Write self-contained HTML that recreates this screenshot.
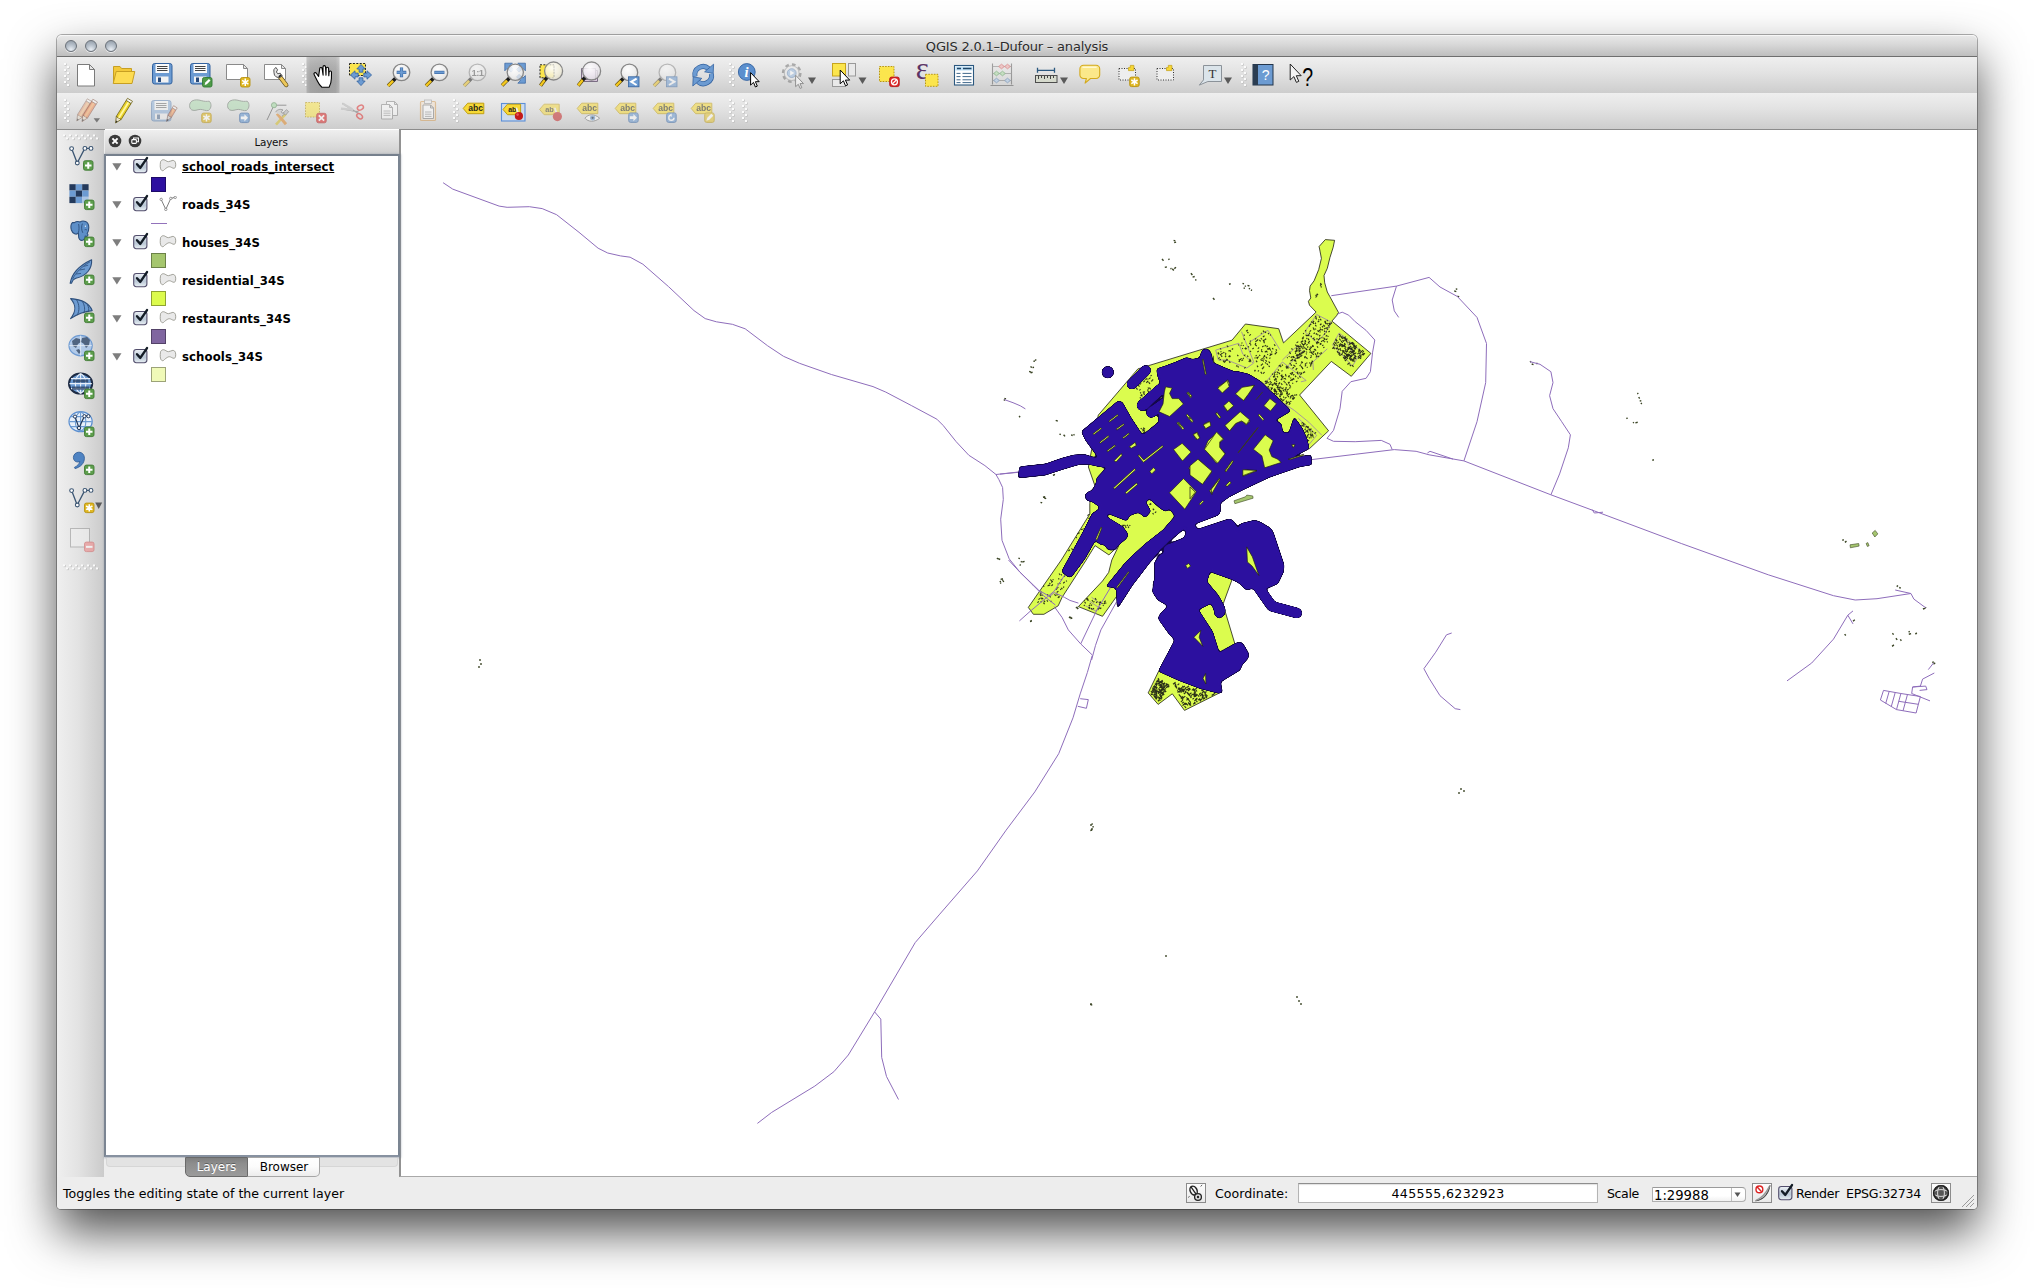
<!DOCTYPE html>
<html>
<head>
<meta charset="utf-8">
<title>QGIS 2.0.1-Dufour - analysis</title>
<style>
html,body{margin:0;padding:0;}
body{width:2034px;height:1288px;background:#fff;overflow:hidden;position:relative;font-family:"DejaVu Sans","Liberation Sans",sans-serif;color:#000;}
.abs{position:absolute;}
#win{position:absolute;left:57px;top:35px;width:1920px;height:1174px;background:#ededed;border-radius:5px 5px 4px 4px;
 box-shadow:0 0 0 1px rgba(0,0,0,0.30), 0 23px 48px 0 rgba(0,0,0,0.69);}
#title{position:absolute;left:0;top:0;width:1920px;height:21px;border-radius:5px 5px 0 0;
 background:linear-gradient(#e9e9e9 0%,#d8d8d8 45%,#bebebe 100%);border-bottom:1px solid #6e6e6e;box-shadow:inset 0 1px 0 #f6f6f6;}
#title .t{position:absolute;left:0;width:1920px;top:3.5px;text-align:center;font-size:13px;line-height:16px;color:#2a2a2a;letter-spacing:-0.2px;text-shadow:0 1px 0 rgba(255,255,255,0.5);}
.tl{position:absolute;top:5px;width:12px;height:12px;border-radius:50%;box-sizing:border-box;border:1px solid #6b7179;
 background:radial-gradient(circle at 50% 85%,#e9eef4 0%,#b9c2cc 45%,#8d97a3 100%);box-shadow:0 1px 0 rgba(255,255,255,0.6);}
.tb{position:absolute;left:0;width:1920px;height:36px;background:linear-gradient(#efefef 0%,#e2e2e2 45%,#cdcdcd 100%);}
#tb1{top:22px;border-bottom:0;}
#tb2{top:58px;}
#tbline{position:absolute;left:0;top:94px;width:1920px;height:1px;background:#8d8d8d;}
#ltb{position:absolute;left:0;top:95px;width:47px;height:1047px;background:linear-gradient(90deg,#efefef 0%,#e3e3e3 45%,#cbcbcb 100%);}
#lp{position:absolute;left:47px;top:94px;width:296px;height:1048px;z-index:2;}
#lpt{position:absolute;left:1px;top:0;width:294px;height:25px;background:linear-gradient(#ffffff 0,#ffffff 1px,#efefef 1px,#e0e0e0 50%,#cfcfcf 100%);}
#lpt .t{position:absolute;left:0;width:294px;top:6px;text-align:center;font-size:10.4px;letter-spacing:-0.2px;line-height:14px;color:#111;padding-left:38px;box-sizing:border-box;}
#tree{position:absolute;left:0;top:25px;width:296px;height:1003px;background:#fff;box-sizing:border-box;border:2px solid #7b8592;border-top-color:#76808d;border-bottom-color:#8791a0;box-shadow:0 0 2px 0.5px rgba(120,132,148,0.55);}
#map{position:absolute;left:342px;top:94px;width:1578px;height:1048px;background:#fff;box-sizing:border-box;border-left:2px solid #929292;border-top:1px solid #8c8c8c;border-bottom:1px solid #a9a9a9;overflow:hidden;}
#status{position:absolute;left:0;top:1142px;width:1920px;height:32px;background:#ededed;border-radius:0 0 4px 4px;}
.lname{position:absolute;font-family:"DejaVu Sans Condensed","DejaVu Sans","Liberation Sans",sans-serif;font-weight:bold;font-size:13px;line-height:16px;white-space:nowrap;letter-spacing:0.1px;}
.sw{position:absolute;width:15px;height:15px;box-sizing:border-box;border:1px solid rgba(0,0,0,0.35);}
.tabt{font-size:12px;line-height:16px;text-align:center;white-space:nowrap;}
.stt{font-size:12.6px;line-height:16px;margin-top:1px;white-space:nowrap;color:#000;}
.sbtn{box-sizing:border-box;border:1px solid #8c8c8c;background:linear-gradient(#fdfdfd,#e9e9e9);}
</style>
</head>
<body>
<svg width="0" height="0" style="position:absolute">
<defs>
<linearGradient id="cbg" x1="0" y1="0" x2="0" y2="1"><stop offset="0" stop-color="#eef2f6"/><stop offset="0.45" stop-color="#c2cedb"/><stop offset="0.600" stop-color="#bccad8"/><stop offset="1" stop-color="#e9f0f4"/></linearGradient>
<g id="chk"><rect x="2.7" y="3.5" width="13.2" height="13.2" rx="2.6" fill="url(#cbg)" stroke="#524e6c" stroke-width="1.1"/><path d="M6 8.200l3.300 3.700L16 2.100" fill="none" stroke="#131c26" stroke-width="2.400" stroke-linecap="round" stroke-linejoin="round"/></g>
<g id="lpoly"><path d="M1.650 3.430C2.400 2.300 3.300 1.700 4.300 1.700C6.200 1.700 7.600 3.700 9.350 3.700C11 3.700 12.400 2.370 13.860 2.370C15.200 2.370 16.100 3.400 16.500 4.760C16.800 6 16.800 7.600 16.500 8.740C16.200 9.700 15.700 10.300 14.900 10.300C13.400 10.300 12 8.740 10.400 8.740C8.800 8.740 7.600 9.900 6.200 10.870C5.300 11.600 4.700 12.700 3.780 12.700C2.800 12.700 2 12 1.650 10.870C1.250 9.600 1.100 8 1.250 6.600C1.300 5.400 1.400 4.300 1.650 3.430z" fill="#e9e9e9" stroke="#97978f" stroke-width="0.9"/></g>
<g id="lline"><path d="M2.2 3.6l4.6 9.8l5-11l4.2-1" fill="none" stroke="#6f6f6f" stroke-width="0.9"/><circle cx="2.2" cy="3.4" r="1.2" fill="#fff" stroke="#6f6f6f" stroke-width="0.7"/><circle cx="6.8" cy="13.4" r="1.2" fill="#fff" stroke="#6f6f6f" stroke-width="0.7"/><circle cx="11.8" cy="2.4" r="1.2" fill="#fff" stroke="#6f6f6f" stroke-width="0.7"/><circle cx="16.2" cy="1.4" r="1.2" fill="#fff" stroke="#6f6f6f" stroke-width="0.7"/></g>
</defs></svg>
<div id="win">
<div id="pg" style="position:absolute;left:-57px;top:-35px;width:2034px;height:1288px;z-index:5;pointer-events:none">
<!--TREE-->
<svg class="abs" style="left:112px;top:163px" width="10" height="8"><path d="M0.3 0.3h9.2l-4.6 7.2z" fill="#7e7e7e"/></svg>
<svg class="abs" style="left:131px;top:156px" width="20" height="20"><use href="#chk"/></svg>
<svg class="abs" style="left:159px;top:158px" width="19" height="15"><use href="#lpoly"/></svg>
<div class="lname" style="left:182px;top:159px;text-decoration:underline;">school_roads_intersect</div>
<div class="sw" style="left:151px;top:177px;background:#2d10a0"></div>
<svg class="abs" style="left:112px;top:201px" width="10" height="8"><path d="M0.3 0.3h9.2l-4.6 7.2z" fill="#7e7e7e"/></svg>
<svg class="abs" style="left:131px;top:194px" width="20" height="20"><use href="#chk"/></svg>
<svg class="abs" style="left:159px;top:196px" width="19" height="15"><use href="#lline"/></svg>
<div class="lname" style="left:182px;top:197px;">roads_34S</div>
<div class="abs" style="left:151px;top:261px;width:16px;height:1px;background:#9272bb;margin-top:-38px"></div>
<svg class="abs" style="left:112px;top:239px" width="10" height="8"><path d="M0.3 0.3h9.2l-4.6 7.2z" fill="#7e7e7e"/></svg>
<svg class="abs" style="left:131px;top:232px" width="20" height="20"><use href="#chk"/></svg>
<svg class="abs" style="left:159px;top:234px" width="19" height="15"><use href="#lpoly"/></svg>
<div class="lname" style="left:182px;top:235px;">houses_34S</div>
<div class="sw" style="left:151px;top:253px;background:#a5c66e"></div>
<svg class="abs" style="left:112px;top:277px" width="10" height="8"><path d="M0.3 0.3h9.2l-4.6 7.2z" fill="#7e7e7e"/></svg>
<svg class="abs" style="left:131px;top:270px" width="20" height="20"><use href="#chk"/></svg>
<svg class="abs" style="left:159px;top:272px" width="19" height="15"><use href="#lpoly"/></svg>
<div class="lname" style="left:182px;top:273px;">residential_34S</div>
<div class="sw" style="left:151px;top:291px;background:#dcfb4c"></div>
<svg class="abs" style="left:112px;top:315px" width="10" height="8"><path d="M0.3 0.3h9.2l-4.6 7.2z" fill="#7e7e7e"/></svg>
<svg class="abs" style="left:131px;top:308px" width="20" height="20"><use href="#chk"/></svg>
<svg class="abs" style="left:159px;top:310px" width="19" height="15"><use href="#lpoly"/></svg>
<div class="lname" style="left:182px;top:311px;">restaurants_34S</div>
<div class="sw" style="left:151px;top:329px;background:#8066a0"></div>
<svg class="abs" style="left:112px;top:353px" width="10" height="8"><path d="M0.3 0.3h9.2l-4.6 7.2z" fill="#7e7e7e"/></svg>
<svg class="abs" style="left:131px;top:346px" width="20" height="20"><use href="#chk"/></svg>
<svg class="abs" style="left:159px;top:348px" width="19" height="15"><use href="#lpoly"/></svg>
<div class="lname" style="left:182px;top:349px;">schools_34S</div>
<div class="sw" style="left:151px;top:367px;background:#f0fab8"></div>
<!--/TREE-->
<!--TABS-->
<div class="abs" style="left:106px;top:1158px;width:292px;height:9px;background:#e3e3e3;border:1px solid #d6d6d6;border-top:0;border-radius:0 0 4px 4px;box-sizing:border-box"></div>
<div class="abs" style="left:185px;top:1157px;width:63px;height:20px;box-sizing:border-box;border:1px solid #6a6a6a;border-radius:0 0 0 5px;background:linear-gradient(#7f7f7f,#8d8d8d 30%,#9b9b9b);"></div>
<div class="abs tabt" style="left:185px;top:1159px;width:63px;color:#fff;text-shadow:0 -1px 0 rgba(0,0,0,0.35)">Layers</div>
<div class="abs" style="left:248px;top:1157px;width:72px;height:20px;box-sizing:border-box;border:1px solid #a6a6a6;border-left:0;border-radius:0 0 5px 0;background:linear-gradient(#ffffff,#fbfbfb 50%,#ececec);"></div>
<div class="abs tabt" style="left:248px;top:1159px;width:72px;color:#000">Browser</div>
<!--/TABS-->
<!--STATUS-->
<div class="abs stt" style="left:63px;top:1185px">Toggles the editing state of the current layer</div>
<div class="abs sbtn" style="left:1186px;top:1183px;width:20px;height:20px"></div>
<div class="abs stt" style="left:1215px;top:1185px">Coordinate:</div>
<div class="abs" style="left:1298px;top:1183px;width:300px;height:20px;box-sizing:border-box;background:#fff;border:1px solid #b4b4b4;border-top-color:#8e8e8e;box-shadow:inset 0 1px 1px rgba(0,0,0,0.12)"></div>
<div class="abs stt" style="left:1298px;top:1185px;width:300px;text-align:center;letter-spacing:0.35px">445555,6232923</div>
<div class="abs stt" style="left:1607px;top:1185px;letter-spacing:-0.4px">Scale</div>
<div class="abs" style="left:1652px;top:1187px;width:94px;height:15px;box-sizing:border-box;background:linear-gradient(#fff,#fff 60%,#f1f1f1);border:1px solid #b0b0b0;border-top-color:#9a9a9a;border-radius:0 4px 4px 0;"></div>
<div class="abs" style="left:1731px;top:1188px;width:1px;height:13px;background:#bdbdbd"></div>
<svg class="abs" style="left:1734px;top:1192px" width="8" height="6"><path d="M0.5 0.5h6l-3 4.6z" fill="#555"/></svg>
<div class="abs stt" style="left:1654px;top:1187px;font-size:13.2px">1:29988</div>
<div class="abs sbtn" style="left:1752px;top:1183px;width:20px;height:20px"></div>
<svg class="abs" style="left:1776px;top:1183px" width="20" height="20"><use href="#chk"/></svg>
<div class="abs stt" style="left:1796px;top:1185px;letter-spacing:-0.3px">Render</div>
<div class="abs stt" style="left:1846px;top:1185px;letter-spacing:-0.25px">EPSG:32734</div>
<div class="abs sbtn" style="left:1931px;top:1183px;width:20px;height:20px"></div>
<svg class="abs" style="left:1961px;top:1194px" width="14" height="14"><path d="M13 1L1 13M13 5L5 13M13 9L9 13" stroke="#9a9a9a" stroke-width="1" fill="none"/></svg>
<!--/STATUS-->
<!--ICONS-->
<svg class="abs" style="left:0;top:0;overflow:visible" width="2034" height="1288" viewBox="0 0 2034 1288"><rect x="64.6" y="63.6" width="2" height="2" fill="#b9b9b9"/><rect x="64" y="63" width="2" height="2" fill="#fbfbfb"/><rect x="67.6" y="66.6" width="2" height="2" fill="#b9b9b9"/><rect x="67" y="66" width="2" height="2" fill="#fbfbfb"/><rect x="64.6" y="69.6" width="2" height="2" fill="#b9b9b9"/><rect x="64" y="69" width="2" height="2" fill="#fbfbfb"/><rect x="67.6" y="72.6" width="2" height="2" fill="#b9b9b9"/><rect x="67" y="72" width="2" height="2" fill="#fbfbfb"/><rect x="64.6" y="75.6" width="2" height="2" fill="#b9b9b9"/><rect x="64" y="75" width="2" height="2" fill="#fbfbfb"/><rect x="67.6" y="78.6" width="2" height="2" fill="#b9b9b9"/><rect x="67" y="78" width="2" height="2" fill="#fbfbfb"/><rect x="64.6" y="81.6" width="2" height="2" fill="#b9b9b9"/><rect x="64" y="81" width="2" height="2" fill="#fbfbfb"/><rect x="67.6" y="84.6" width="2" height="2" fill="#b9b9b9"/><rect x="67" y="84" width="2" height="2" fill="#fbfbfb"/><rect x="302.6" y="63.6" width="2" height="2" fill="#b9b9b9"/><rect x="302" y="63" width="2" height="2" fill="#fbfbfb"/><rect x="305.6" y="66.6" width="2" height="2" fill="#b9b9b9"/><rect x="305" y="66" width="2" height="2" fill="#fbfbfb"/><rect x="302.6" y="69.6" width="2" height="2" fill="#b9b9b9"/><rect x="302" y="69" width="2" height="2" fill="#fbfbfb"/><rect x="305.6" y="72.6" width="2" height="2" fill="#b9b9b9"/><rect x="305" y="72" width="2" height="2" fill="#fbfbfb"/><rect x="302.6" y="75.6" width="2" height="2" fill="#b9b9b9"/><rect x="302" y="75" width="2" height="2" fill="#fbfbfb"/><rect x="305.6" y="78.6" width="2" height="2" fill="#b9b9b9"/><rect x="305" y="78" width="2" height="2" fill="#fbfbfb"/><rect x="302.6" y="81.6" width="2" height="2" fill="#b9b9b9"/><rect x="302" y="81" width="2" height="2" fill="#fbfbfb"/><rect x="305.6" y="84.6" width="2" height="2" fill="#b9b9b9"/><rect x="305" y="84" width="2" height="2" fill="#fbfbfb"/><rect x="729.6" y="63.6" width="2" height="2" fill="#b9b9b9"/><rect x="729" y="63" width="2" height="2" fill="#fbfbfb"/><rect x="732.6" y="66.6" width="2" height="2" fill="#b9b9b9"/><rect x="732" y="66" width="2" height="2" fill="#fbfbfb"/><rect x="729.6" y="69.6" width="2" height="2" fill="#b9b9b9"/><rect x="729" y="69" width="2" height="2" fill="#fbfbfb"/><rect x="732.6" y="72.6" width="2" height="2" fill="#b9b9b9"/><rect x="732" y="72" width="2" height="2" fill="#fbfbfb"/><rect x="729.6" y="75.6" width="2" height="2" fill="#b9b9b9"/><rect x="729" y="75" width="2" height="2" fill="#fbfbfb"/><rect x="732.6" y="78.6" width="2" height="2" fill="#b9b9b9"/><rect x="732" y="78" width="2" height="2" fill="#fbfbfb"/><rect x="729.6" y="81.6" width="2" height="2" fill="#b9b9b9"/><rect x="729" y="81" width="2" height="2" fill="#fbfbfb"/><rect x="732.6" y="84.6" width="2" height="2" fill="#b9b9b9"/><rect x="732" y="84" width="2" height="2" fill="#fbfbfb"/><rect x="1241.6" y="63.6" width="2" height="2" fill="#b9b9b9"/><rect x="1241" y="63" width="2" height="2" fill="#fbfbfb"/><rect x="1244.6" y="66.6" width="2" height="2" fill="#b9b9b9"/><rect x="1244" y="66" width="2" height="2" fill="#fbfbfb"/><rect x="1241.6" y="69.6" width="2" height="2" fill="#b9b9b9"/><rect x="1241" y="69" width="2" height="2" fill="#fbfbfb"/><rect x="1244.6" y="72.6" width="2" height="2" fill="#b9b9b9"/><rect x="1244" y="72" width="2" height="2" fill="#fbfbfb"/><rect x="1241.6" y="75.6" width="2" height="2" fill="#b9b9b9"/><rect x="1241" y="75" width="2" height="2" fill="#fbfbfb"/><rect x="1244.6" y="78.6" width="2" height="2" fill="#b9b9b9"/><rect x="1244" y="78" width="2" height="2" fill="#fbfbfb"/><rect x="1241.6" y="81.6" width="2" height="2" fill="#b9b9b9"/><rect x="1241" y="81" width="2" height="2" fill="#fbfbfb"/><rect x="1244.6" y="84.6" width="2" height="2" fill="#b9b9b9"/><rect x="1244" y="84" width="2" height="2" fill="#fbfbfb"/><defs><radialGradient id="lensg" cx="0.4" cy="0.32" r="0.75"><stop offset="0" stop-color="#fff" stop-opacity="0.85"/><stop offset="0.55" stop-color="#fff" stop-opacity="0.15"/><stop offset="1" stop-color="#999" stop-opacity="0.18"/></radialGradient><linearGradient id="prs" x1="0" x2="1" y1="0" y2="0"><stop offset="0" stop-color="#bdbdbd"/><stop offset="0.12" stop-color="#adadad"/><stop offset="0.5" stop-color="#a7a7a7"/><stop offset="0.88" stop-color="#adadad"/><stop offset="1" stop-color="#c2c2c2"/></linearGradient><linearGradient id="prv" x1="0" x2="0" y1="0" y2="1"><stop offset="0" stop-color="#fff" stop-opacity="0.22"/><stop offset="1" stop-color="#000" stop-opacity="0.05"/></linearGradient></defs><rect x="306.5" y="57" width="33" height="36" fill="url(#prs)"/><rect x="306.5" y="57" width="33" height="36" fill="url(#prv)"/><path d="M77.5 64.5h12l5 5v16.5h-17z" fill="#fff" stroke="#7a7a7a" stroke-width="1" stroke-linejoin="round"/><path d="M89.5 64.5v5h5z" fill="#e6e6e6" stroke="#7a7a7a" stroke-width="1" stroke-linejoin="round"/><path d="M113.5 82.5V66.5h6.5l1.6 2h9.9v4" fill="#f3c93a" stroke="#c79f22" stroke-linejoin="round"/><path d="M113.2 83.5l3-12h18.6l-2.8 12z" fill="#fddc53" stroke="#c79f22" stroke-linejoin="round"/><rect x="152.5" y="63.5" width="19.5" height="20.5" rx="2.2" fill="#6c9bd2" stroke="#33629f"/><rect x="155.5" y="64" width="13.5" height="9" fill="#fafafa"/><path d="M157 66.5h10.5M157 68.5h10.5M157 70.5h10.5" stroke="#444" stroke-width="1"/><rect x="156" y="76.5" width="12.5" height="6" fill="#f2f2f2"/><rect x="158" y="77.5" width="3" height="4.5" fill="#27497a"/><rect x="190.5" y="63.5" width="19.5" height="20.5" rx="2.2" fill="#6c9bd2" stroke="#33629f"/><rect x="193.5" y="64" width="13.5" height="9" fill="#fafafa"/><path d="M195 66.5h10.5M195 68.5h10.5M195 70.5h10.5" stroke="#444" stroke-width="1"/><rect x="194" y="76.5" width="12.5" height="6" fill="#f2f2f2"/><rect x="196" y="77.5" width="3" height="4.5" fill="#27497a"/><rect x="202.5" y="77.5" width="9.5" height="9.5" rx="1.8" fill="#4f9a48" stroke="#2f7a33" stroke-width="0.9"/><path d="M204.6 84.9l0.7-2.3 3.6-3.6 1.6 1.6-3.6 3.6z" fill="#fff"/><path d="M226.5 64.5h17l4 4v11h-21z" fill="#fff" stroke="#8a8a8a" stroke-width="1" stroke-linejoin="round"/><path d="M243.5 64.5v4h4z" fill="#e6e6e6" stroke="#8a8a8a" stroke-width="1" stroke-linejoin="round"/><rect x="240.5" y="77.5" width="9.5" height="9.5" rx="1.8" fill="#dfb722" stroke="#b8920f" stroke-width="0.9"/><path d="M245.25 78.6v7.3M242.1 80.4l6.3 3.7M242.1 84.1l6.3 -3.7" stroke="#fff" stroke-width="1.5"/><path d="M264.5 64.5h17l4 4v11h-21z" fill="#fff" stroke="#8a8a8a" stroke-width="1" stroke-linejoin="round"/><path d="M281.5 64.5v4h4z" fill="#e6e6e6" stroke="#8a8a8a" stroke-width="1" stroke-linejoin="round"/><path d="M279.800 76.600L286.200 85" stroke="#5a4a1c" stroke-width="4.400" stroke-linecap="round"/><path d="M279.800 76.600L286.200 85" stroke="#ecc75a" stroke-width="3" stroke-linecap="round"/><g transform="translate(-0.600,2.400)"><path d="M274.600 70.400a4.600 4.600 0 0 0 6.800 4.200l1.400-1.200-2-2.600-2.400 0.600-1.400-1.800 1.200-2.200-1.800-2.400a4.600 4.600 0 0 0-1.800 5.400z" fill="#e6e6e6" stroke="#444" stroke-width="0.900" stroke-linejoin="round"/><path d="M279.400 74.400l2.400-1.800" stroke="#222" stroke-width="1.600"/></g><path d="M318.6 76.4l-2.3-3.2c-0.9-1.3-2.9-0.3-2.2 1.2l3.4 6.9c1.2 2.5 2.7 4.6 4.4 5.9h7.2c1.4-2.3 2.2-5.3 2.3-8.6l0.1-6.4c0-1.6-2.3-1.7-2.4-0.1l-0.3 3.6-0.2-7.2c0-1.6-2.4-1.6-2.5 0l-0.1 6.6-0.5-8.3c-0.1-1.6-2.5-1.5-2.5 0.1l0.1 8.3-1-6.7c-0.2-1.5-2.5-1.2-2.4 0.4z" fill="#fff" stroke="#000" stroke-width="1.1" stroke-linejoin="round"/><rect x="349.5" y="63.5" width="16" height="12" fill="#fbe54d" stroke="#222" stroke-width="1" stroke-dasharray="2 1.4"/><path transform="translate(361,75) rotate(0)" d="M0 -10.6l4.2 4.6h-2.3v3.2h-3.8v-3.200h-2.300z" fill="#6c9bd2" stroke="#33629f" stroke-width="0.8" stroke-linejoin="round"/><path transform="translate(361,75) rotate(90)" d="M0 -10.6l4.2 4.6h-2.3v3.2h-3.8v-3.200h-2.300z" fill="#6c9bd2" stroke="#33629f" stroke-width="0.8" stroke-linejoin="round"/><path transform="translate(361,75) rotate(180)" d="M0 -10.6l4.2 4.6h-2.3v3.2h-3.8v-3.200h-2.300z" fill="#6c9bd2" stroke="#33629f" stroke-width="0.8" stroke-linejoin="round"/><path transform="translate(361,75) rotate(270)" d="M0 -10.6l4.2 4.6h-2.3v3.2h-3.8v-3.200h-2.300z" fill="#6c9bd2" stroke="#33629f" stroke-width="0.8" stroke-linejoin="round"/><path d="M393.4 80.5L388.1 85.8" stroke="#5b4a10" stroke-width="3.6" stroke-linecap="butt"/><path d="M393.4 80.5L388.1 85.8" stroke="#f4c81e" stroke-width="2.4" stroke-linecap="butt"/><path d="M396.4 77.5L393.1 80.8" stroke="#1a1a1a" stroke-width="3.6"/><circle cx="401.5" cy="72.4" r="8.3" fill="#f1f1f1" fill-opacity="0.78" stroke="#868686" stroke-width="1.3"/><circle cx="401.5" cy="72.4" r="7.700000000000001" fill="url(#lensg)"/><path d="M401.5 67.6v9.6M396.7 72.4h9.6" stroke="#33629f" stroke-width="3.2"/><path d="M401.5 68v8.8M397.1 72.4h8.8" stroke="#6c9bd2" stroke-width="2"/><path d="M431.3 80.5L426.0 85.8" stroke="#5b4a10" stroke-width="3.6" stroke-linecap="butt"/><path d="M431.3 80.5L426.0 85.8" stroke="#f4c81e" stroke-width="2.4" stroke-linecap="butt"/><path d="M434.3 77.5L431.0 80.8" stroke="#1a1a1a" stroke-width="3.6"/><circle cx="439.4" cy="72.4" r="8.3" fill="#f1f1f1" fill-opacity="0.78" stroke="#868686" stroke-width="1.3"/><circle cx="439.4" cy="72.4" r="7.700000000000001" fill="url(#lensg)"/><path d="M434.4 72.4h10" stroke="#33629f" stroke-width="3.2"/><path d="M434.8 72.4h9.2" stroke="#6c9bd2" stroke-width="2"/><g opacity="0.5"><path d="M469.4 80.5L464.1 85.8" stroke="#5b4a10" stroke-width="3.6" stroke-linecap="butt"/><path d="M469.4 80.5L464.1 85.8" stroke="#f4c81e" stroke-width="2.4" stroke-linecap="butt"/><path d="M472.4 77.5L469.1 80.8" stroke="#1a1a1a" stroke-width="3.6"/><circle cx="477.5" cy="72.4" r="8.3" fill="#f1f1f1" fill-opacity="0.78" stroke="#868686" stroke-width="1.3"/><circle cx="477.5" cy="72.4" r="7.700000000000001" fill="url(#lensg)"/><text x="477.5" y="76" font-family="Liberation Sans, sans-serif" font-weight="bold" font-size="9.5" text-anchor="middle" fill="#555" letter-spacing="-0.5">1:1</text></g><path transform="translate(504.8,63.2) rotate(0)" d="M0 0h7.6l-2.500 2.500 3.800 3.800-2.600 2.600-3.800-3.800-2.500 2.500z" fill="#6c9bd2" stroke="#33629f" stroke-width="0.7" stroke-linejoin="round"/><path transform="translate(525.4,63.2) rotate(90)" d="M0 0h7.6l-2.500 2.500 3.800 3.800-2.600 2.600-3.800-3.800-2.500 2.500z" fill="#6c9bd2" stroke="#33629f" stroke-width="0.7" stroke-linejoin="round"/><path transform="translate(525.4,83.2) rotate(180)" d="M0 0h7.6l-2.500 2.500 3.800 3.800-2.600 2.600-3.800-3.800-2.500 2.500z" fill="#6c9bd2" stroke="#33629f" stroke-width="0.7" stroke-linejoin="round"/><path d="M507.4 80.1L502.1 85.4" stroke="#5b4a10" stroke-width="3.6" stroke-linecap="butt"/><path d="M507.4 80.1L502.1 85.4" stroke="#f4c81e" stroke-width="2.4" stroke-linecap="butt"/><path d="M510.4 77.1L507.1 80.4" stroke="#1a1a1a" stroke-width="3.6"/><circle cx="515.3" cy="72.2" r="8.1" fill="#f2f2f2" fill-opacity="0.72" stroke="#868686" stroke-width="1.3"/><circle cx="515.3" cy="72.2" r="7.5" fill="url(#lensg)"/><rect x="540" y="64.8" width="14" height="13" fill="#fbe54d" stroke="#222" stroke-width="1" stroke-dasharray="2 1.4"/><path d="M545.0 79.6L540.5 85.6" stroke="#5b4a10" stroke-width="3.6" stroke-linecap="butt"/><path d="M545.0 79.6L540.5 85.6" stroke="#f4c81e" stroke-width="2.4" stroke-linecap="butt"/><path d="M548.0 76.6L544.7 79.9" stroke="#1a1a1a" stroke-width="3.6"/><circle cx="553.6" cy="71" r="9" fill="#f3efd8" fill-opacity="0.78" stroke="#868686" stroke-width="1.3"/><circle cx="553.6" cy="71" r="8.4" fill="url(#lensg)"/><path d="M546.5 64.8h7.5v13" fill="none" stroke="#999" stroke-width="0.8" stroke-dasharray="1.5 1.5" opacity="0.7"/><path d="M583.5 70.500h14v11h-14z" fill="#d8c6dc" stroke="#6f6278" stroke-width="0.900"/><path d="M581.500 68.500h14v11h-14z" fill="#e2d3e6" stroke="#6f6278" stroke-width="0.900"/><path d="M583.0 79.6L578.2 85.6" stroke="#5b4a10" stroke-width="3.6" stroke-linecap="butt"/><path d="M583.0 79.6L578.2 85.6" stroke="#f4c81e" stroke-width="2.4" stroke-linecap="butt"/><path d="M586.0 76.6L582.7 79.9" stroke="#1a1a1a" stroke-width="3.6"/><circle cx="591.6" cy="71" r="9" fill="#ece8ee" fill-opacity="0.78" stroke="#868686" stroke-width="1.3"/><circle cx="591.6" cy="71" r="8.4" fill="url(#lensg)"/><path d="M621.3 80.5L616.0 85.8" stroke="#5b4a10" stroke-width="3.6" stroke-linecap="butt"/><path d="M621.3 80.5L616.0 85.8" stroke="#f4c81e" stroke-width="2.4" stroke-linecap="butt"/><path d="M624.3 77.5L621.0 80.8" stroke="#1a1a1a" stroke-width="3.6"/><circle cx="629.4" cy="72.4" r="8.3" fill="#f1f1f1" fill-opacity="0.78" stroke="#868686" stroke-width="1.3"/><circle cx="629.4" cy="72.4" r="7.700000000000001" fill="url(#lensg)"/><rect x="628.5" y="76.8" width="10.5" height="10" fill="#6c9bd2" stroke="#33629f" stroke-width="0.8"/><path d="M636.6 78.6l-5.4 3.2 5.4 3.2" fill="none" stroke="#fff" stroke-width="2"/><g opacity="0.5"><path d="M659.3 80.5L654.0 85.8" stroke="#5b4a10" stroke-width="3.6" stroke-linecap="butt"/><path d="M659.3 80.5L654.0 85.8" stroke="#f4c81e" stroke-width="2.4" stroke-linecap="butt"/><path d="M662.3 77.5L659.0 80.8" stroke="#1a1a1a" stroke-width="3.6"/><circle cx="667.4" cy="72.4" r="8.3" fill="#f1f1f1" fill-opacity="0.78" stroke="#868686" stroke-width="1.3"/><circle cx="667.4" cy="72.4" r="7.700000000000001" fill="url(#lensg)"/><rect x="666.5" y="76.8" width="10.5" height="10" fill="#6c9bd2" stroke="#33629f" stroke-width="0.8"/><path d="M669 78.6l5.4 3.2-5.4 3.2" fill="none" stroke="#fff" stroke-width="2"/></g><path d="M695 76.500a8.300 8.300 0 0 1 13.600-7.900" fill="none" stroke="#33629f" stroke-width="5"/><path d="M695 76.500a8.300 8.300 0 0 1 13.600-7.900" fill="none" stroke="#6c9bd2" stroke-width="3.600"/><path d="M704.600 71.800l8.600 1.600 0.400-9.200z" fill="#6c9bd2" stroke="#33629f" stroke-width="0.800" stroke-linejoin="round"/><path d="M711.400 73.700a8.300 8.300 0 0 1-13.600 7.900" fill="none" stroke="#33629f" stroke-width="5"/><path d="M711.400 73.700a8.300 8.300 0 0 1-13.600 7.900" fill="none" stroke="#6c9bd2" stroke-width="3.600"/><path d="M701.800 78.400l-8.600-1.600-0.400 9.200z" fill="#6c9bd2" stroke="#33629f" stroke-width="0.800" stroke-linejoin="round"/><circle cx="746.8" cy="72" r="8.4" fill="#5b8fce" stroke="#33629f" stroke-width="0.9"/><text x="746.6" y="77.2" font-family="Liberation Serif, serif" font-style="italic" font-weight="bold" font-size="14.5" text-anchor="middle" fill="#fff">i</text><path d="M750.6 72.6L750.6 85.1L753.5 82.4L755.4 87.0L757.3 86.1L755.4 81.7L759.2 81.7z" fill="#fff" stroke="#000" stroke-width="1" stroke-linejoin="round"/><g opacity="0.55"><circle cx="791.7" cy="73.1" r="8.600" fill="none" stroke="#777" stroke-width="2.600" stroke-dasharray="3.600 3.150"/><circle cx="791.7" cy="73.1" r="7.400" fill="#ececec" stroke="#888" stroke-width="0.8"/><circle cx="791.7" cy="73.1" r="4.4" fill="#9dbce0" stroke="#5b80b0" stroke-width="0.8"/><path d="M790.2 70.6l4.2 2.5-4.2 2.5z" fill="#fff"/><path d="M795.6 75.2L795.6 86.7L798.3 84.3L800.1 88.4L801.8 87.7L800.0 83.6L803.5 83.6z" fill="#fff" stroke="#555" stroke-width="1" stroke-linejoin="round"/></g><path d="M808 77.4h8l-4 6.6z" fill="#5a5a5a"/><rect x="832.5" y="63.5" width="13" height="12.5" fill="#fbe54d" stroke="#c7a41d" stroke-width="1"/><rect x="848.5" y="63.5" width="7" height="12.5" fill="#e9e9e9" stroke="#999" stroke-width="1"/><rect x="832.5" y="79.5" width="13" height="7" fill="#e9e9e9" stroke="#999" stroke-width="1"/><path d="M840.2 70.0L840.2 83.8L843.4 80.8L845.5 85.8L847.6 84.9L845.4 80.1L849.7 80.1z" fill="#fff" stroke="#000" stroke-width="1" stroke-linejoin="round"/><path d="M858.5 77.4h8l-4 6.6z" fill="#5a5a5a"/><rect x="879.5" y="66.5" width="14.5" height="15" fill="#fbe54d" stroke="#b8960f" stroke-width="1" stroke-dasharray="1.6 1.2"/><rect x="889.7" y="77.1" width="9.5" height="9.5" rx="1.8" fill="#e02a2a" stroke="#b01515" stroke-width="0.9"/><circle cx="894.45" cy="81.85" r="3" fill="none" stroke="#fff" stroke-width="1.3"/><path d="M892.4000000000001 83.89999999999999l4.1-4.1" stroke="#fff" stroke-width="1.3"/><text x="922.3" y="79.2" font-family="Liberation Serif, DejaVu Serif, serif" font-size="31" text-anchor="middle" fill="#5c3566">ε</text><rect x="925.5" y="74.3" width="12.5" height="12" fill="#fbe54d" stroke="#b8960f" stroke-width="1" stroke-dasharray="1.6 1.2"/><rect x="954.5" y="65.5" width="19" height="19.5" fill="#fff" stroke="#2b587f" stroke-width="1.1"/><rect x="955.5" y="66.5" width="17" height="4" fill="#bfe0f6"/><path d="M957 68.5h4M963 68.5h8.5" stroke="#1f4566" stroke-width="1.6"/><path d="M956.5 73.4h4M962.5 73.4h9M956.5 76.6h4M962.5 76.6h9M956.5 79.8h4M962.5 79.8h9M956.5 82.6h4M962.5 82.6h9" stroke="#2b587f" stroke-width="0.9"/><g opacity="0.5"><path d="M992.5 63.5v21M1011.5 63.5v21M990.5 85.5h23" stroke="#555" stroke-width="1.1" fill="none"/><path d="M992.5 66.5h19M992.5 73.5h19M992.5 80.5h19" stroke="#666" stroke-width="0.8"/><path d="M998.7 66.5l2.8-2.3 2.8 2.3-2.8 2.3z" fill="#f2a6a6" stroke="#c33" stroke-width="0.8"/><path d="M1004.7 66.5l2.8-2.3 2.8 2.3-2.8 2.3z" fill="#f2a6a6" stroke="#c33" stroke-width="0.8"/><path d="M993.7 73.5l2.8-2.3 2.8 2.3-2.8 2.3z" fill="#a9dba1" stroke="#3a8a3a" stroke-width="0.8"/><path d="M999.7 73.5l2.8-2.3 2.8 2.3-2.8 2.3z" fill="#a9dba1" stroke="#3a8a3a" stroke-width="0.8"/><path d="M993.7 80.5l2.8-2.3 2.8 2.3-2.8 2.3z" fill="#a8c8ea" stroke="#36659d" stroke-width="0.8"/><path d="M1004.7 80.5l2.8-2.3 2.8 2.3-2.8 2.3z" fill="#a8c8ea" stroke="#36659d" stroke-width="0.8"/></g><rect x="1035.5" y="75.5" width="21.5" height="7" fill="#d6dacd" stroke="#4d4d4d" stroke-width="1"/><path d="M1038.5 76v3M1041.5 76v2M1044.5 76v3M1047.5 76v2M1050.5 76v3M1053.5 76v2" stroke="#333" stroke-width="0.9"/><path d="M1037.5 70.3h17M1037.5 67.8v5M1054.5 67.8v5" stroke="#2b587f" stroke-width="1.3" fill="none"/><path d="M1060 77.4h8l-4 6.6z" fill="#5a5a5a"/><path d="M1083.5 65.3h12.6a3.6 3.6 0 0 1 3.6 3.6v6a3.6 3.6 0 0 1-3.6 3.6h-5.6l-5.4 4.6 1.3-4.6h-2.9a3.6 3.6 0 0 1-3.6-3.6v-6a3.6 3.6 0 0 1 3.6-3.6z" fill="#fbe88a" stroke="#d3a91c" stroke-width="1.1" stroke-linejoin="round"/><path d="M1083 67.2h13" stroke="#fff8d0" stroke-width="1.6" stroke-linecap="round"/><rect x="1119" y="68.5" width="16.5" height="11.5" fill="#eeeeee" stroke="#333" stroke-width="1" stroke-dasharray="1 1.5"/><path d="M1128.5 70.6v-3h1.8v-2.2h3.6v5.2z" fill="#f7d733" stroke="#c7a41d" stroke-width="0.8"/><rect x="1129.7" y="77.1" width="9.5" height="9.5" rx="1.8" fill="#dfb722" stroke="#b8920f" stroke-width="0.9"/><path d="M1134.45 78.19999999999999v7.3M1131.3 80.0l6.3 3.7M1131.3 83.69999999999999l6.3 -3.7" stroke="#fff" stroke-width="1.5"/><rect x="1157" y="68.5" width="16.5" height="11.5" fill="#eeeeee" stroke="#333" stroke-width="1" stroke-dasharray="1 1.5"/><path d="M1166.5 70.6v-3h1.8v-2.2h3.6v5.2z" fill="#f7d733" stroke="#c7a41d" stroke-width="0.8"/><path d="M1203.5 65.5h18v16h-13.6l-8.6 3.6 4.2-5.2z" fill="#dbe4ea" stroke="#8b9299" stroke-width="1" stroke-linejoin="round"/><text x="1212.6" y="78" font-family="Liberation Serif, serif" font-size="13" text-anchor="middle" fill="#333">T</text><path d="M1224 77.4h8l-4 6.6z" fill="#5a5a5a"/><rect x="1253" y="64.5" width="20" height="20.5" fill="#6c9bd2" stroke="#23344a" stroke-width="1"/><rect x="1253" y="64.5" width="5" height="20.5" fill="#2b3d52"/><text x="1265.6" y="80" font-family="Liberation Sans, sans-serif" font-size="14" text-anchor="middle" fill="#fff">?</text><path d="M1290.2 64.0L1290.2 80.0L1293.9 76.6L1296.4 82.4L1298.8 81.3L1296.3 75.7L1301.2 75.7z" fill="#f4f4f4" stroke="#222" stroke-width="1" stroke-linejoin="round"/><text transform="translate(1307.600,85.600) scale(0.780,1)" font-family="Liberation Sans, sans-serif" font-size="25" text-anchor="middle" fill="#000">?</text><rect x="64.6" y="99.6" width="2" height="2" fill="#b9b9b9"/><rect x="64" y="99" width="2" height="2" fill="#fbfbfb"/><rect x="67.6" y="102.6" width="2" height="2" fill="#b9b9b9"/><rect x="67" y="102" width="2" height="2" fill="#fbfbfb"/><rect x="64.6" y="105.6" width="2" height="2" fill="#b9b9b9"/><rect x="64" y="105" width="2" height="2" fill="#fbfbfb"/><rect x="67.6" y="108.6" width="2" height="2" fill="#b9b9b9"/><rect x="67" y="108" width="2" height="2" fill="#fbfbfb"/><rect x="64.6" y="111.6" width="2" height="2" fill="#b9b9b9"/><rect x="64" y="111" width="2" height="2" fill="#fbfbfb"/><rect x="67.6" y="114.6" width="2" height="2" fill="#b9b9b9"/><rect x="67" y="114" width="2" height="2" fill="#fbfbfb"/><rect x="64.6" y="117.6" width="2" height="2" fill="#b9b9b9"/><rect x="64" y="117" width="2" height="2" fill="#fbfbfb"/><rect x="67.6" y="120.6" width="2" height="2" fill="#b9b9b9"/><rect x="67" y="120" width="2" height="2" fill="#fbfbfb"/><rect x="453.6" y="99.6" width="2" height="2" fill="#b9b9b9"/><rect x="453" y="99" width="2" height="2" fill="#fbfbfb"/><rect x="456.6" y="102.6" width="2" height="2" fill="#b9b9b9"/><rect x="456" y="102" width="2" height="2" fill="#fbfbfb"/><rect x="453.6" y="105.6" width="2" height="2" fill="#b9b9b9"/><rect x="453" y="105" width="2" height="2" fill="#fbfbfb"/><rect x="456.6" y="108.6" width="2" height="2" fill="#b9b9b9"/><rect x="456" y="108" width="2" height="2" fill="#fbfbfb"/><rect x="453.6" y="111.6" width="2" height="2" fill="#b9b9b9"/><rect x="453" y="111" width="2" height="2" fill="#fbfbfb"/><rect x="456.6" y="114.6" width="2" height="2" fill="#b9b9b9"/><rect x="456" y="114" width="2" height="2" fill="#fbfbfb"/><rect x="453.6" y="117.6" width="2" height="2" fill="#b9b9b9"/><rect x="453" y="117" width="2" height="2" fill="#fbfbfb"/><rect x="456.6" y="120.6" width="2" height="2" fill="#b9b9b9"/><rect x="456" y="120" width="2" height="2" fill="#fbfbfb"/><rect x="729.6" y="99.6" width="2" height="2" fill="#b9b9b9"/><rect x="729" y="99" width="2" height="2" fill="#fbfbfb"/><rect x="732.6" y="102.6" width="2" height="2" fill="#b9b9b9"/><rect x="732" y="102" width="2" height="2" fill="#fbfbfb"/><rect x="729.6" y="105.6" width="2" height="2" fill="#b9b9b9"/><rect x="729" y="105" width="2" height="2" fill="#fbfbfb"/><rect x="732.6" y="108.6" width="2" height="2" fill="#b9b9b9"/><rect x="732" y="108" width="2" height="2" fill="#fbfbfb"/><rect x="729.6" y="111.6" width="2" height="2" fill="#b9b9b9"/><rect x="729" y="111" width="2" height="2" fill="#fbfbfb"/><rect x="732.6" y="114.6" width="2" height="2" fill="#b9b9b9"/><rect x="732" y="114" width="2" height="2" fill="#fbfbfb"/><rect x="729.6" y="117.6" width="2" height="2" fill="#b9b9b9"/><rect x="729" y="117" width="2" height="2" fill="#fbfbfb"/><rect x="732.6" y="120.6" width="2" height="2" fill="#b9b9b9"/><rect x="732" y="120" width="2" height="2" fill="#fbfbfb"/><rect x="742.6" y="99.6" width="2" height="2" fill="#b9b9b9"/><rect x="742" y="99" width="2" height="2" fill="#fbfbfb"/><rect x="745.6" y="102.6" width="2" height="2" fill="#b9b9b9"/><rect x="745" y="102" width="2" height="2" fill="#fbfbfb"/><rect x="742.6" y="105.6" width="2" height="2" fill="#b9b9b9"/><rect x="742" y="105" width="2" height="2" fill="#fbfbfb"/><rect x="745.6" y="108.6" width="2" height="2" fill="#b9b9b9"/><rect x="745" y="108" width="2" height="2" fill="#fbfbfb"/><rect x="742.6" y="111.6" width="2" height="2" fill="#b9b9b9"/><rect x="742" y="111" width="2" height="2" fill="#fbfbfb"/><rect x="745.6" y="114.6" width="2" height="2" fill="#b9b9b9"/><rect x="745" y="114" width="2" height="2" fill="#fbfbfb"/><rect x="742.6" y="117.6" width="2" height="2" fill="#b9b9b9"/><rect x="742" y="117" width="2" height="2" fill="#fbfbfb"/><rect x="745.6" y="120.6" width="2" height="2" fill="#b9b9b9"/><rect x="745" y="120" width="2" height="2" fill="#fbfbfb"/><g opacity="0.55"><path d="M76.8 121.0L82.2 117.3L77.6 114.5z" fill="#e9e2d2" stroke="#8a6a5a" stroke-width="0.8" stroke-linejoin="round"/><path d="M76.8 121.0L78.9 119.5L77.2 118.4z" fill="#333"/><path d="M82.2 117.3L90.6 103.7L86.0 100.9L77.6 114.5z" fill="#e8a27c" stroke="#8a6a5a" stroke-width="0.8" stroke-linejoin="round"/><path d="M79.9 115.9L88.3 102.3" stroke="#f2c08a" stroke-width="1.8"/><path d="M90.6 103.7L91.9 101.6L87.3 98.8L86.0 100.9z" fill="#f6f6f6" stroke="#8a6a5a" stroke-width="0.8" stroke-linejoin="round"/></g><g opacity="0.6"><path d="M82.0 121.6L87.5 118.0L82.9 115.1z" fill="#e9e2d2" stroke="#8a5a4a" stroke-width="0.8" stroke-linejoin="round"/><path d="M82.0 121.6L84.1 120.1L82.4 119.0z" fill="#333"/><path d="M87.5 118.0L96.2 104.2L91.6 101.3L82.9 115.1z" fill="#ee9060" stroke="#8a5a4a" stroke-width="0.8" stroke-linejoin="round"/><path d="M85.2 116.5L93.9 102.7" stroke="#f5b070" stroke-width="1.8"/><path d="M96.2 104.2L97.5 102.0L92.9 99.2L91.6 101.3z" fill="#f6f6f6" stroke="#8a5a4a" stroke-width="0.8" stroke-linejoin="round"/></g><path d="M93.6 118.2h6.4l-3.2 4.4z" fill="#777"/><g opacity="1"><path d="M115.6 123.0L121.2 119.4L116.3 116.4z" fill="#e9e2d2" stroke="#6b5e10" stroke-width="0.8" stroke-linejoin="round"/><path d="M115.6 123.0L117.7 121.5L116.0 120.4z" fill="#333"/><path d="M121.2 119.4L131.1 103.5L126.2 100.4L116.3 116.4z" fill="#e8d028" stroke="#6b5e10" stroke-width="0.8" stroke-linejoin="round"/><path d="M118.8 117.9L128.7 101.9" stroke="#fff7a0" stroke-width="1.9"/><path d="M131.1 103.5L132.5 101.3L127.5 98.3L126.2 100.4z" fill="#f6f6f6" stroke="#6b5e10" stroke-width="0.8" stroke-linejoin="round"/></g><g opacity="0.4"><rect x="151.5" y="100.5" width="19.5" height="20.5" rx="2.2" fill="#6c9bd2" stroke="#33629f"/><rect x="154.5" y="101" width="13.5" height="9" fill="#fafafa"/><path d="M156 103.5h10.5M156 105.5h10.5M156 107.5h10.5" stroke="#444" stroke-width="1"/><rect x="155" y="113.5" width="12.5" height="6" fill="#f2f2f2"/><rect x="157" y="114.5" width="3" height="4.5" fill="#27497a"/></g><g opacity="0.6"><path d="M166.6 121.4L171.5 117.3L167.9 115.2z" fill="#e9e2d2" stroke="#8a5a4a" stroke-width="0.8" stroke-linejoin="round"/><path d="M166.6 121.4L168.7 119.9L167.0 118.8z" fill="#333"/><path d="M171.5 117.3L175.9 110.0L172.3 107.9L167.9 115.2z" fill="#ee9060" stroke="#8a5a4a" stroke-width="0.8" stroke-linejoin="round"/><path d="M169.7 116.3L174.1 108.9" stroke="#f5b070" stroke-width="1.4"/><path d="M175.9 110.0L177.2 107.9L173.6 105.7L172.3 107.9z" fill="#f6f6f6" stroke="#8a5a4a" stroke-width="0.8" stroke-linejoin="round"/></g><g opacity="0.6"><path d="M192 101.0c3-1.6 6.2-1.3 9.2-0.4c3 0.9 5.6 0.9 8 0.6c2.6 2.2 2.4 7-0.6 9.2c-2.8 1-5.6-1.2-8.4-1c-3 0.2-5.4 1.8-8.4 0.6c-3.2-2-2.8-7 0.2-9z" fill="#b2dab4" stroke="#7c857c" stroke-width="1"/><rect x="201.7" y="113.1" width="9.5" height="9.5" rx="1.8" fill="#dfb722" stroke="#b8920f" stroke-width="0.9"/><path d="M206.45 114.19999999999999v7.3M203.29999999999998 116.0l6.3 3.7M203.29999999999998 119.69999999999999l6.3 -3.7" stroke="#fff" stroke-width="1.5"/></g><g opacity="0.6"><path d="M230 101.0c3-1.6 6.2-1.3 9.2-0.4c3 0.9 5.6 0.9 8 0.6c2.6 2.2 2.4 7-0.6 9.2c-2.8 1-5.6-1.2-8.4-1c-3 0.2-5.4 1.8-8.4 0.6c-3.2-2-2.8-7 0.2-9z" fill="#b2dab4" stroke="#7c857c" stroke-width="1"/><rect x="239.7" y="113.1" width="9.5" height="9.5" rx="1.8" fill="#6c9bd2" stroke="#33629f" stroke-width="0.9"/><path d="M240.79999999999998 116.39999999999999h3.6v-2.2l3.6 3.65-3.6 3.65v-2.2h-3.6z" fill="#fff"/></g><g opacity="0.6" transform="translate(0,3.600)"><path d="M267 116.400l7-14.800h12.400" fill="none" stroke="#555" stroke-width="0.9"/><circle cx="274" cy="101.6" r="2.6" fill="#a6d8a6" stroke="#5a8a5a" stroke-width="0.8"/><path d="M276 121l10-11" stroke="#d8c23a" stroke-width="2.6"/><path d="M277 110l9 10.6" stroke="#e0913a" stroke-width="3"/><path d="M275.4 108.6c1.6-2.6 5-3.6 7.6-2.2l-1.8 1.6 1 1.6 2.2-0.6c0 1.4-1 3-2.4 3.6" fill="#ccc" stroke="#666" stroke-width="0.8"/><rect x="283.6" y="107.2" width="4.6" height="3" transform="rotate(-48 286 108.6)" fill="#bbb" stroke="#666" stroke-width="0.7"/></g><g opacity="0.55"><rect x="305.5" y="102.5" width="14" height="14.5" fill="#fbe54d" stroke="#b8960f" stroke-width="1" stroke-dasharray="1.6 1.2"/><rect x="316.7" y="113.3" width="9.5" height="9.5" rx="1.8" fill="#e02a2a" stroke="#b01515" stroke-width="0.9"/><path d="M318.8 115.39999999999999l5.3 5.3M324.09999999999997 115.39999999999999l-5.3 5.3" stroke="#fff" stroke-width="1.8"/></g><g opacity="0.55"><path d="M341 108.6l17.6 3.2M342.4 103.4l15.2 9.6" stroke="#777" stroke-width="1.3" fill="none"/><path d="M341 108.6l12 1.2M342.4 103.4l10 5.8" stroke="#bbb" stroke-width="2.2" fill="none"/><ellipse cx="360.4" cy="107.6" rx="3.2" ry="2.2" transform="rotate(-28 360.4 107.6)" fill="none" stroke="#d33" stroke-width="1.5"/><ellipse cx="359.6" cy="116.2" rx="3.2" ry="2.2" transform="rotate(38 359.6 116.2)" fill="none" stroke="#d33" stroke-width="1.5"/></g><g opacity="0.45"><path d="M386.5 101.5h8l3 3v11h-11z" fill="#fff" stroke="#777" stroke-width="1" stroke-linejoin="round"/><path d="M394.5 101.5v3h3z" fill="#e6e6e6" stroke="#777" stroke-width="1" stroke-linejoin="round"/><path d="M381.5 104.5h8l3 3v11.5h-11z" fill="#fff" stroke="#777" stroke-width="1" stroke-linejoin="round"/><path d="M389.5 104.5v3h3z" fill="#e6e6e6" stroke="#777" stroke-width="1" stroke-linejoin="round"/><path d="M383.5 111h7M383.5 113.2h7M383.5 115.4h7" stroke="#777" stroke-width="0.8"/></g><g opacity="0.5"><rect x="420.5" y="101.5" width="15" height="19" rx="1" fill="#f4e2cc" stroke="#d49a50" stroke-width="1.2"/><rect x="424.5" y="100" width="7" height="3.4" fill="#eee" stroke="#888" stroke-width="0.8"/><path d="M423 105h7.5l3 3v10.5h-10.5z" fill="#fff" stroke="#777" stroke-width="1" stroke-linejoin="round"/><path d="M430.5 105v3h3z" fill="#e6e6e6" stroke="#777" stroke-width="1" stroke-linejoin="round"/><path d="M425 112h6.5M425 114.2h6.5M425 116.4h6.5" stroke="#777" stroke-width="0.8"/></g><path d="M467.7 103.2H483.8V113.7H467.7L463.2 108.45z" fill="#f6d936" stroke="#c19f12" stroke-width="1" stroke-linejoin="round"/><text x="475.59999999999997" y="111.4" font-family="Liberation Sans, sans-serif" font-weight="bold" font-size="8.6" text-anchor="middle" fill="#2a2a1a">abc</text><rect x="501.5" y="103.5" width="23.5" height="17.5" fill="#cddbed" stroke="#5b8fd8" stroke-width="1.1"/><path d="M507.5 104.2H520.6V114.7H507.5L503 109.45z" fill="#f6d936" stroke="#c19f12" stroke-width="1" stroke-linejoin="round"/><text x="513.9" y="112.4" font-family="Liberation Sans, sans-serif" font-weight="bold" font-size="7" text-anchor="middle" dx="-1.6" fill="#2a2a1a">ab</text><path d="M516.6 108.4l1.6 5" stroke="#eee" stroke-width="1.8" stroke-linecap="round"/><circle cx="518.9" cy="116" r="4.1" fill="#c41a1a"/><circle cx="517.6" cy="114.6" r="1.3" fill="#e66" opacity="0.8"/><g opacity="0.5"><path d="M544.1 104.2H559.2V114.7H544.1L539.6 109.45z" fill="#f6d936" stroke="#c19f12" stroke-width="1" stroke-linejoin="round"/><text x="551.5000000000001" y="112.4" font-family="Liberation Sans, sans-serif" font-weight="bold" font-size="7.4" text-anchor="middle" dx="-2" fill="#2a2a1a">ab</text><path d="M555 108.4l1.6 5" stroke="#eee" stroke-width="1.8" stroke-linecap="round"/><circle cx="557.4" cy="116.6" r="4.6" fill="#c41a1a"/></g><g opacity="0.55"><path d="M581.7 103.2H597.8000000000001V113.7H581.7L577.2 108.45z" fill="#f6d936" stroke="#c19f12" stroke-width="1" stroke-linejoin="round"/><text x="589.6000000000001" y="111.4" font-family="Liberation Sans, sans-serif" font-weight="bold" font-size="8.6" text-anchor="middle" fill="#2a2a1a">abc</text><path d="M585 118.2c3-4.4 10-4.4 14.6 0c-4.6 4-11.6 4-14.6 0z" fill="#fff" stroke="#555" stroke-width="0.8"/><circle cx="592.6" cy="117.8" r="2.6" fill="#6c9bd2"/><circle cx="592.6" cy="117.8" r="1.1" fill="#123"/></g><g opacity="0.55"><path d="M619.7 103.2H635.8000000000001V113.7H619.7L615.2 108.45z" fill="#f6d936" stroke="#c19f12" stroke-width="1" stroke-linejoin="round"/><text x="627.6000000000001" y="111.4" font-family="Liberation Sans, sans-serif" font-weight="bold" font-size="8.6" text-anchor="middle" fill="#2a2a1a">abc</text><rect x="628.7" y="112.9" width="9.5" height="9.5" rx="1.8" fill="#6c9bd2" stroke="#33629f" stroke-width="0.9"/><path d="M629.8000000000001 116.2h3.6v-2.2l3.6 3.65-3.6 3.65v-2.2h-3.6z" fill="#fff"/></g><g opacity="0.55"><path d="M657.7 103.2H673.8000000000001V113.7H657.7L653.2 108.45z" fill="#f6d936" stroke="#c19f12" stroke-width="1" stroke-linejoin="round"/><text x="665.6000000000001" y="111.4" font-family="Liberation Sans, sans-serif" font-weight="bold" font-size="8.6" text-anchor="middle" fill="#2a2a1a">abc</text><rect x="666.7" y="112.9" width="9.5" height="9.5" rx="1.8" fill="#6c9bd2" stroke="#33629f" stroke-width="0.9"/><path d="M674.0 117.80000000000001a2.6 2.6 0 1 1-2.6-2.7" fill="none" stroke="#fff" stroke-width="1.4"/><path d="M671.6 113.4l-2.4 1.8 2.4 1.8z" fill="#fff"/></g><g opacity="0.55"><path d="M695.7 103.2H711.8000000000001V113.7H695.7L691.2 108.45z" fill="#f6d936" stroke="#c19f12" stroke-width="1" stroke-linejoin="round"/><text x="703.6000000000001" y="111.4" font-family="Liberation Sans, sans-serif" font-weight="bold" font-size="8.6" text-anchor="middle" fill="#2a2a1a">abc</text><rect x="704.7" y="112.9" width="9.5" height="9.5" rx="1.8" fill="#e6c636" stroke="#b8960f" stroke-width="0.9"/><path d="M706.4000000000001 120.7l0.9-2.9 4-4 2 2-4 4z" fill="#fff"/></g><rect x="63.6" y="135.1" width="2" height="2" fill="#b9b9b9"/><rect x="63" y="134.5" width="2" height="2" fill="#fbfbfb"/><rect x="66.6" y="138.1" width="2" height="2" fill="#b9b9b9"/><rect x="66" y="137.5" width="2" height="2" fill="#fbfbfb"/><rect x="69.6" y="135.1" width="2" height="2" fill="#b9b9b9"/><rect x="69" y="134.5" width="2" height="2" fill="#fbfbfb"/><rect x="72.6" y="138.1" width="2" height="2" fill="#b9b9b9"/><rect x="72" y="137.5" width="2" height="2" fill="#fbfbfb"/><rect x="75.6" y="135.1" width="2" height="2" fill="#b9b9b9"/><rect x="75" y="134.5" width="2" height="2" fill="#fbfbfb"/><rect x="78.6" y="138.1" width="2" height="2" fill="#b9b9b9"/><rect x="78" y="137.5" width="2" height="2" fill="#fbfbfb"/><rect x="81.6" y="135.1" width="2" height="2" fill="#b9b9b9"/><rect x="81" y="134.5" width="2" height="2" fill="#fbfbfb"/><rect x="84.6" y="138.1" width="2" height="2" fill="#b9b9b9"/><rect x="84" y="137.5" width="2" height="2" fill="#fbfbfb"/><rect x="87.6" y="135.1" width="2" height="2" fill="#b9b9b9"/><rect x="87" y="134.5" width="2" height="2" fill="#fbfbfb"/><rect x="90.6" y="138.1" width="2" height="2" fill="#b9b9b9"/><rect x="90" y="137.5" width="2" height="2" fill="#fbfbfb"/><rect x="93.6" y="135.1" width="2" height="2" fill="#b9b9b9"/><rect x="93" y="134.5" width="2" height="2" fill="#fbfbfb"/><rect x="96.6" y="138.1" width="2" height="2" fill="#b9b9b9"/><rect x="96" y="137.5" width="2" height="2" fill="#fbfbfb"/><rect x="63.6" y="565.1" width="2" height="2" fill="#b9b9b9"/><rect x="63" y="564.5" width="2" height="2" fill="#fbfbfb"/><rect x="66.6" y="568.1" width="2" height="2" fill="#b9b9b9"/><rect x="66" y="567.5" width="2" height="2" fill="#fbfbfb"/><rect x="69.6" y="565.1" width="2" height="2" fill="#b9b9b9"/><rect x="69" y="564.5" width="2" height="2" fill="#fbfbfb"/><rect x="72.6" y="568.1" width="2" height="2" fill="#b9b9b9"/><rect x="72" y="567.5" width="2" height="2" fill="#fbfbfb"/><rect x="75.6" y="565.1" width="2" height="2" fill="#b9b9b9"/><rect x="75" y="564.5" width="2" height="2" fill="#fbfbfb"/><rect x="78.6" y="568.1" width="2" height="2" fill="#b9b9b9"/><rect x="78" y="567.5" width="2" height="2" fill="#fbfbfb"/><rect x="81.6" y="565.1" width="2" height="2" fill="#b9b9b9"/><rect x="81" y="564.5" width="2" height="2" fill="#fbfbfb"/><rect x="84.6" y="568.1" width="2" height="2" fill="#b9b9b9"/><rect x="84" y="567.5" width="2" height="2" fill="#fbfbfb"/><rect x="87.6" y="565.1" width="2" height="2" fill="#b9b9b9"/><rect x="87" y="564.5" width="2" height="2" fill="#fbfbfb"/><rect x="90.6" y="568.1" width="2" height="2" fill="#b9b9b9"/><rect x="90" y="567.5" width="2" height="2" fill="#fbfbfb"/><rect x="93.6" y="565.1" width="2" height="2" fill="#b9b9b9"/><rect x="93" y="564.5" width="2" height="2" fill="#fbfbfb"/><rect x="96.6" y="568.1" width="2" height="2" fill="#b9b9b9"/><rect x="96" y="567.5" width="2" height="2" fill="#fbfbfb"/><path d="M71.6 148.6l5.6 14.4 7.6-14.6h6.2" fill="none" stroke="#3b5572" stroke-width="1.3" stroke-linejoin="round"/><circle cx="71.6" cy="148.6" r="1.9" fill="#fff" stroke="#3b5572" stroke-width="1.1"/><circle cx="77.3" cy="163" r="1.9" fill="#fff" stroke="#3b5572" stroke-width="1.1"/><circle cx="84.9" cy="148.4" r="1.9" fill="#fff" stroke="#3b5572" stroke-width="1.1"/><circle cx="91" cy="148.4" r="1.9" fill="#fff" stroke="#3b5572" stroke-width="1.1"/><rect x="83.5" y="160.7" width="9.5" height="9.5" rx="1.8" fill="#5d9e4c" stroke="#3f7a33" stroke-width="0.9"/><path d="M88.25 162.2v6.5M85 165.45h6.5" stroke="#fff" stroke-width="2"/><rect x="69.4" y="184.2" width="6.4" height="6.3" fill="#23395b"/><rect x="75.8" y="184.2" width="6.4" height="6.3" fill="#6c9bd2"/><rect x="82.2" y="184.2" width="6.4" height="6.3" fill="#23395b"/><rect x="69.4" y="190.5" width="6.4" height="6.3" fill="#6c9bd2"/><rect x="75.8" y="190.5" width="6.4" height="6.3" fill="#23395b"/><rect x="82.2" y="190.5" width="6.4" height="6.3" fill="#6c9bd2"/><rect x="69.4" y="196.8" width="6.4" height="6.3" fill="#23395b"/><rect x="75.8" y="196.8" width="6.4" height="6.3" fill="#6c9bd2"/><rect x="82.2" y="196.8" width="6.4" height="6.3" fill="#a9c4e4"/><rect x="84.5" y="200.1" width="9.5" height="9.5" rx="1.8" fill="#5d9e4c" stroke="#3f7a33" stroke-width="0.9"/><path d="M89.25 201.6v6.5M86 204.85h6.5" stroke="#fff" stroke-width="2"/><path d="M74.400 222.600c1.600-1.200 3.800-1.400 5.600-0.600c1.600-1 3.800-1.200 5.600-0.400c2.200 1 3.200 3.200 3.200 5.800c0 2.200-0.600 4.400-1.600 6.200c0.800 0.600 1 1.600 0.400 2.200c-0.600 0.600-1.600 0.600-2.400 0.200c0 1.600-0.400 3-1.600 3.800c-1.200 0.800-3 0.600-4-0.400c-0.800-0.800-1-2-1-3.200l-0.200-3.400c-0.800 1.200-2.400 1.600-3.800 1c-1.400-0.600-2.600-2-3.200-3.800c-0.800-2.600-0.600-5.600 1-7.400z" fill="#5d8fc8" stroke="#2d4f7c" stroke-width="1.100" stroke-linejoin="round"/><path d="M78.600 224c0.600 2.600 0.600 5.800-0.200 8.600M82.400 223.600c-1.200 2.800-1 6.400 0.400 9.200M84.600 229.800c0.800-0.400 1.800-0.200 2.400 0.400" stroke="#2d4f7c" stroke-width="0.900" fill="none"/><circle cx="85.400" cy="226.200" r="0.600" fill="#fff"/><rect x="84.5" y="237.1" width="9.5" height="9.5" rx="1.8" fill="#5d9e4c" stroke="#3f7a33" stroke-width="0.9"/><path d="M89.25 238.6v6.5M86 241.85h6.5" stroke="#fff" stroke-width="2"/><path d="M70.2 283.2c1.2-7.6 6.4-16.4 21.4-23.4c0.6 8.4-4.6 16-15.6 18.4c-2 0.6-3.6 2-4.4 5z" fill="#6c9bd2" stroke="#2d4f7c" stroke-width="1.1" stroke-linejoin="round"/><path d="M72.4 279.4c3.6-7.2 9.6-13 17.6-17.6M76 274l5-0.6M79.6 270l5.4-1M83.6 266.4l4.6-1.2" stroke="#2d4f7c" stroke-width="0.8" fill="none"/><rect x="84.5" y="275.1" width="9.5" height="9.5" rx="1.8" fill="#5d9e4c" stroke="#3f7a33" stroke-width="0.9"/><path d="M89.25 276.6v6.5M86 279.85h6.5" stroke="#fff" stroke-width="2"/><path d="M70.6 298.6c8.2 0.6 18.4 3.4 21.6 12c-5.6 0.6-13.6 2.4-21.6 8c5.4-7 6.2-13 0-20z" fill="#6c9bd2" stroke="#2d4f7c" stroke-width="1.1" stroke-linejoin="round"/><path d="M76.6 299.8c3 5 3 10.8 0.6 15.4M82.6 301.8c2.4 4 2.4 8.400 1.200 11.4M87.600 305c1.200 2.400 1.400 4.600 0.800 6.800" stroke="#2d4f7c" stroke-width="0.9" fill="none"/><rect x="84.5" y="313.1" width="9.5" height="9.5" rx="1.8" fill="#5d9e4c" stroke="#3f7a33" stroke-width="0.9"/><path d="M89.25 314.6v6.5M86 317.85h6.5" stroke="#fff" stroke-width="2"/><g opacity="0.85"><ellipse cx="80.6" cy="345.6" rx="11.6" ry="10.200" fill="#a9c6ea" stroke="#5b8fd0" stroke-width="1.2"/><path d="M72 341l4-3 4 1 1 3-3 2-2 4-3-2zM82 338l5-1 3 3-1 5-3 3-2-4-3-2zM76 350l3-1 2 3-2 2z" fill="#23395b" opacity="0.85"/><path d="M69.4 345.600h22.4M80.6 335.600v20" stroke="#e8f0fa" stroke-width="0.800" fill="none"/></g><rect x="84.5" y="351.1" width="9.5" height="9.5" rx="1.8" fill="#5d9e4c" stroke="#3f7a33" stroke-width="0.9"/><path d="M89.25 352.6v6.5M86 355.85h6.5" stroke="#fff" stroke-width="2"/><ellipse cx="80.6" cy="383.6" rx="11.6" ry="10" fill="#6c9bd2" stroke="#1d2b44" stroke-width="2"/><path d="M69.4 383.6h22.4M71 378.6h19.200M71 388.6h19.200M80.6 373.6v20M80.6 373.6c-7 4-7 16 0 20M80.6 373.6c7 4 7 16 0 20" stroke="#e8f0fa" stroke-width="1.1" fill="none"/><path d="M73 379.600h15.200v3h-15.200zM72 386.600h17.200v3.200h-17.200z" fill="#23395b" opacity="0.75"/><rect x="84.5" y="389.1" width="9.5" height="9.5" rx="1.8" fill="#5d9e4c" stroke="#3f7a33" stroke-width="0.9"/><path d="M89.25 390.6v6.5M86 393.85h6.5" stroke="#fff" stroke-width="2"/><ellipse cx="80.6" cy="421.6" rx="11.6" ry="10" fill="#e8f0fa" stroke="#5b8fd0" stroke-width="1.2"/><path d="M69.4 421.6h22.4M71 416.6h19.200M71 426.6h19.200M80.6 411.6v20M80.6 411.6c-7 4-7 16 0 20M80.6 411.6c7 4 7 16 0 20" stroke="#6c9bd2" stroke-width="1.1" fill="none"/><path d="M75 416.600l4 11.400 5.400-11.800h4" fill="none" stroke="#23395b" stroke-width="1.200"/><circle cx="75" cy="416.6" r="1.600" fill="#fff" stroke="#23395b" stroke-width="1"/><circle cx="79" cy="428" r="1.600" fill="#fff" stroke="#23395b" stroke-width="1"/><circle cx="84.4" cy="416.2" r="1.600" fill="#fff" stroke="#23395b" stroke-width="1"/><circle cx="88.4" cy="416.2" r="1.600" fill="#fff" stroke="#23395b" stroke-width="1"/><rect x="84.5" y="427.1" width="9.5" height="9.5" rx="1.8" fill="#5d9e4c" stroke="#3f7a33" stroke-width="0.9"/><path d="M89.25 428.6v6.5M86 431.85h6.5" stroke="#fff" stroke-width="2"/><path d="M73.400 457.600c0-3 2.400-5.400 5.400-5.400c3.400 0 5.600 2.600 5.600 6c0 5-3.600 8.800-9.400 10.400l-0.600-1.200c3.200-1.600 5-3.600 5.400-6c-0.600 0.400-1.400 0.600-2.200 0.600c-2.400 0-4.200-1.800-4.200-4.400z" fill="#4f83c2" stroke="#2d5a94" stroke-width="0.800"/><rect x="84.5" y="465.1" width="9.5" height="9.5" rx="1.8" fill="#5d9e4c" stroke="#3f7a33" stroke-width="0.9"/><path d="M89.25 466.6v6.5M86 469.85h6.5" stroke="#fff" stroke-width="2"/><path d="M71.6 490.6l5.6 14.4 7.6-14.6h6.2" fill="none" stroke="#3b5572" stroke-width="1.3" stroke-linejoin="round"/><circle cx="71.6" cy="490.6" r="1.9" fill="#fff" stroke="#3b5572" stroke-width="1.1"/><circle cx="77.3" cy="505" r="1.9" fill="#fff" stroke="#3b5572" stroke-width="1.1"/><circle cx="84.9" cy="490.4" r="1.9" fill="#fff" stroke="#3b5572" stroke-width="1.1"/><circle cx="91" cy="490.4" r="1.9" fill="#fff" stroke="#3b5572" stroke-width="1.1"/><rect x="84.5" y="503.1" width="9.5" height="9.5" rx="1.8" fill="#dfb722" stroke="#b8920f" stroke-width="0.9"/><path d="M89.25 504.20000000000005v7.3M86.1 506.0l6.3 3.7M86.1 509.70000000000005l6.3 -3.7" stroke="#fff" stroke-width="1.5"/><path d="M95.200 502.400h7l-3.500 6.600z" fill="#5a5a5a"/><g opacity="0.6"><rect x="70.500" y="528.500" width="19" height="18.500" fill="#f0f0f0" stroke="#999" stroke-width="1"/><rect x="84.5" y="542.1" width="9.5" height="9.5" rx="1.8" fill="#f08a8a" stroke="#d06060" stroke-width="0.9"/><path d="M86 546.85h6.5" stroke="#fff" stroke-width="2"/></g><circle cx="115" cy="141" r="6.3" fill="#3a3a3a"/><path d="M112.400 138.400l5.200 5.200M117.600 138.400l-5.200 5.200" stroke="#fff" stroke-width="2"/><circle cx="135" cy="141" r="6.300" fill="#3a3a3a"/><rect x="131.800" y="139.600" width="4.600" height="3.800" rx="0.800" fill="none" stroke="#fff" stroke-width="1.100"/><path d="M133.600 139.400v-1.400h4.800v3.800h-1.600" fill="none" stroke="#fff" stroke-width="1.100"/><g><ellipse cx="1193.600" cy="1190.600" rx="3.400" ry="4.600" transform="rotate(-25 1193.6 1190.6)" fill="none" stroke="#222" stroke-width="1.500"/><path d="M1190.800 1186.600l8.400 12" stroke="#222" stroke-width="1.300"/><circle cx="1198" cy="1197" r="3.400" fill="#ddd" stroke="#222" stroke-width="1.300"/><circle cx="1198" cy="1197" r="1.200" fill="#222"/><path d="M1200.600 1186.400l1.600-1.400M1189.600 1196.400l-1.400 1" stroke="#444" stroke-width="0.900"/></g><g><path d="M1755.600 1200.800c7-1 12-6 14.400-15.400c-1.400 8-5 14-14.400 15.400z" fill="#666" stroke="#444" stroke-width="0.800"/><path d="M1756 1200.400c6-2.400 10-7 13.400-14" stroke="#999" stroke-width="1.400" fill="none"/><circle cx="1759.400" cy="1189.400" r="3.400" fill="#fff" stroke="#d22" stroke-width="1.400"/><path d="M1757.200 1187l4.400 4.800" stroke="#d22" stroke-width="1.400"/></g><g><circle cx="1941" cy="1193" r="7.300" fill="#555" stroke="#222" stroke-width="1.200"/><ellipse cx="1941" cy="1193" rx="3.400" ry="7.300" fill="none" stroke="#ddd" stroke-width="1"/><ellipse cx="1941" cy="1193" rx="7.300" ry="3.400" fill="none" stroke="#ddd" stroke-width="1"/><circle cx="1941" cy="1193" r="7.300" fill="none" stroke="#222" stroke-width="1.600"/></g></svg>
<!--/ICONS-->
</div>
  <div id="title">
    <div class="tl" style="left:8px"></div><div class="tl" style="left:28px"></div><div class="tl" style="left:48px"></div>
    <div class="t">QGIS 2.0.1–Dufour – analysis</div>
  </div>
  <div class="tb" id="tb1"></div>
  <div class="tb" id="tb2"></div>
  <div id="tbline"></div>
  <div id="ltb"></div>
  <div id="lp">
    <div id="lpt"><div class="t">Layers</div></div>
    <div id="tree"></div>
  </div>
  <div id="map"><svg style="position:absolute;left:0;top:0" width="1576" height="1046" viewBox="401 130 1576 1046"><g fill="#dbfc4e" stroke="#1e1e14" stroke-width="0.8" stroke-linejoin="round"><path d="M1325.3 239.6L1334.6 240.3L1333.2 247.2L1329.9 257.7L1327.3 268.3L1324.0 275.5L1324.7 282.8L1327.3 292.0L1329.9 296.7L1338.5 312.5L1336.5 315.8L1331.9 321.1L1370.9 353.4L1351.3 376.3L1331.3 361.4L1299.6 395.0L1328.6 430.8L1309.5 448.6L1289.0 458.5L1250.0 473.0L1215.0 492.0L1183.0 520.0L1150.0 546.0L1128.0 572.0L1117.0 592.0L1116.5 596.5L1102.5 616.3L1078.4 606.6L1102.5 581.0L1108.7 572.4L1111.8 560.0L1118.8 545.6L1108.9 554.9L1095.0 545.6L1086.2 560.0L1062.1 597.3L1058.2 605.8L1043.9 614.3L1033.4 614.3L1028.3 607.4L1061.3 560.0L1089.8 514.0L1089.8 503.4L1091.0 491.0L1095.0 486.0L1088.4 467.0L1091.0 453.0L1098.3 415.1L1137.9 368.9L1232.0 340.2L1245.4 324.0L1278.7 328.7L1283.5 342.9L1316.1 312.1L1309.5 305.2L1308.4 301.3L1310.8 298.0L1309.5 290.7L1310.1 286.1L1314.1 280.8L1318.7 269.6L1321.4 258.4L1320.0 251.1L1319.1 246.5z"/><path d="M1209.8 571.3L1232.2 579.2L1223.0 604.3L1234.9 643.9L1219.5 652.0L1219.5 692.9L1184.5 710.4L1172.3 693.8L1158.1 704.4L1148.2 692.9L1158.7 671.1L1175.0 640.0L1190.0 600.0z"/><path d="M1242.8 539.6L1246.7 546.9L1252.4 556.8L1258.9 575.5L1238.8 573.9z"/></g><g fill="none" stroke="#8e6dbb" stroke-width="0.8" opacity="0.85"><path d="M1215.7 350.1L1238.8 343.3L1242.8 354.1L1253.4 363.3L1246.8 368.0L1227.0 360.0L1218.4 360.0L1215.7 350.1"/><path d="M1241.5 331.7L1254.0 362.7"/><path d="M1249.4 342.2L1267.9 330.3L1279.8 349.5"/><path d="M1304.9 331.7L1316.7 314.5L1331.9 322.4L1323.3 335.6L1316.7 342.2L1304.9 331.7"/><path d="M1282.4 360.0L1296.9 346.2L1302.2 351.5L1286.4 367.3"/><path d="M1263.9 384.5L1282.4 362.0L1306.2 380.5L1300.9 381.8"/><path d="M1327.3 348.8L1312.8 362.0L1313.4 369.9"/><path d="M1332.6 344.9L1339.2 333.0L1361.6 351.5L1352.4 366.0L1332.6 344.9"/><path d="M1343.1 335.6L1356.3 359.4"/><path d="M1282.4 402.4L1294.3 410.4L1308.8 422.2L1322.0 435.4"/><path d="M1298.3 418.3L1316.7 435.4L1308.8 444.7L1299.6 432.8"/><path d="M1091.6 597.3L1100.2 603.5L1096.3 611.2L1085.4 605.8"/><path d="M1089.3 601.1L1098.6 607.4"/></g><path fill="none" stroke="#2a3018" stroke-width="1.1" d="M1300.0 344.5l0.7 0.8M1292.4 382.8l0.7 0.9M1306.5 362.6l0.7 0.8M1291.9 358.8l1.1 1.3M1311.8 360.7l1.1 1.4M1309.8 349.5l0.8 1.1M1275.7 379.7l0.9 -0.7M1312.7 339.1l1.7 -1.4M1286.6 392.6l1.2 -1.0M1322.9 339.9l1.1 1.4M1302.6 353.0l1.6 -1.2M1295.7 370.1l0.8 -0.7M1319.2 338.6l1.2 -0.9M1290.2 386.5l0.7 0.9M1300.7 372.4l1.3 1.7M1328.7 326.6l0.8 0.9M1320.0 329.1l0.9 1.0M1310.2 357.9l1.3 -1.1M1301.5 347.0l0.9 1.2M1271.6 384.2l1.3 1.7M1273.1 376.1l1.2 1.5M1319.9 328.2l0.8 -0.6M1310.8 335.7l0.9 1.1M1300.2 355.6l1.1 1.4M1313.6 333.8l1.3 -1.0M1317.2 354.1l1.0 -0.8M1295.8 369.4l1.5 -1.3M1320.2 323.9l0.9 1.1M1317.0 341.4l1.2 1.5M1295.1 375.9l0.7 0.8M1273.6 389.0l1.3 1.5M1304.9 364.5l1.2 -1.0M1312.7 322.3l1.2 1.5M1319.6 332.4l1.0 -0.8M1297.6 377.5l0.9 1.1M1320.1 318.8l1.2 1.5M1323.2 325.7l0.9 -0.8M1299.3 355.2l1.5 -1.2M1315.8 357.3l1.3 -1.1M1293.5 364.8l1.0 1.2M1310.5 351.5l1.0 1.3M1324.1 330.7l0.9 1.2M1273.9 373.4l1.2 1.4M1295.4 376.2l0.7 0.9M1278.5 372.4l1.4 1.7M1285.3 374.1l0.6 0.8M1285.8 366.9l1.2 -1.0M1279.0 387.7l0.9 -0.7M1319.2 335.5l0.7 0.9M1311.2 321.5l0.7 0.8M1317.7 322.1l1.6 -1.3M1275.7 391.3l1.1 1.3M1270.7 382.0l0.9 1.2M1276.8 387.1l1.2 1.4M1268.9 385.1l1.6 -1.3M1304.3 371.7l0.7 0.8M1281.0 395.1l1.7 -1.3M1280.0 395.2l1.1 -0.8M1307.8 335.7l1.5 -1.2M1299.4 376.2l1.1 1.4M1298.2 349.5l1.2 1.4M1324.5 321.5l1.0 1.3M1281.6 374.7l0.8 1.0M1296.9 346.8l1.2 -1.0M1313.8 340.3l1.3 -1.1M1295.9 355.6l1.7 -1.4M1295.2 352.8l0.7 0.9M1326.8 321.0l0.9 -0.7M1327.9 326.1l1.6 -1.2M1279.1 389.7l1.2 -1.0M1309.7 347.5l1.2 1.5M1303.4 345.0l1.2 -0.9M1321.6 338.2l0.8 -0.7M1284.8 378.0l1.2 1.5M1313.0 352.6l1.5 -1.2M1280.8 375.2l1.1 1.4M1308.0 338.9l1.0 1.3M1315.0 349.4l1.1 1.3M1291.5 348.3l1.0 1.3M1281.7 377.5l1.3 -1.0M1295.8 362.9l0.6 0.8M1299.2 353.9l1.2 -1.0M1329.4 322.8l1.2 1.6M1269.4 378.7l0.6 0.8M1279.0 391.5l1.4 -1.1M1299.1 351.5l1.5 -1.2M1303.1 347.2l1.0 -0.8M1280.0 394.9l1.5 -1.1M1296.7 372.9l1.5 -1.1M1309.6 331.6l1.5 -1.3M1284.7 382.2l0.8 1.0M1281.6 388.0l0.7 0.9M1291.8 373.0l0.8 1.0M1326.9 341.4l0.8 1.0M1295.4 344.7l1.4 1.6M1285.4 375.2l1.0 1.2M1280.3 365.9l0.9 1.2M1325.7 336.4l1.5 -1.2M1326.0 339.8l1.4 -1.2M1275.8 380.5l1.2 1.4M1304.7 342.2l1.1 -0.9M1298.4 346.6l0.7 0.9M1300.7 342.3l1.7 -1.4M1297.3 372.9l1.0 1.2M1323.9 334.6l1.3 -1.1M1316.4 339.3l1.1 -0.8M1288.9 375.4l0.8 0.9M1282.6 390.4l0.9 -0.8M1330.8 322.4l1.0 1.2M1280.8 379.9l1.6 -1.4M1296.2 347.7l1.3 1.5M1274.5 372.8l1.2 -0.9M1308.9 349.6l0.8 -0.7M1307.2 347.5l1.1 -1.0M1302.6 344.1l1.2 1.5M1288.7 356.8l0.9 -0.7M1317.9 340.2l1.5 -1.3M1274.4 379.3l0.8 1.0M1305.2 330.2l1.0 1.2M1318.6 331.2l1.6 -1.3M1308.9 340.9l0.9 1.2M1300.9 366.1l0.8 1.1M1295.0 351.0l1.1 1.4M1317.8 357.0l1.4 -1.1M1297.5 345.1l1.4 1.6M1323.5 337.7l1.3 1.5M1278.3 384.3l1.4 -1.1M1274.3 388.5l0.8 1.0M1326.0 331.3l0.8 1.0M1324.1 329.1l1.5 -1.2M1315.5 317.7l1.2 1.6M1300.9 363.4l1.6 -1.3M1278.7 366.3l1.7 -1.3M1319.0 336.1l1.4 -1.1M1305.9 349.7l1.1 -0.9M1306.0 353.5l0.7 0.9M1311.7 351.6l0.7 0.8M1301.6 342.9l1.1 1.4M1304.3 356.9l1.0 1.2M1299.6 348.7l1.0 -0.8M1325.4 322.5l1.1 1.3M1304.7 356.0l1.1 1.4M1312.7 353.6l1.0 1.3M1295.1 375.6l1.0 1.2M1327.7 336.0l0.7 0.8M1274.8 389.0l1.3 1.5M1285.7 387.2l0.9 1.1M1289.1 384.5l1.3 1.7M1295.6 358.9l0.8 -0.6M1293.0 375.3l1.3 -1.0M1317.0 346.4l1.1 1.3M1287.9 383.1l1.5 -1.3M1311.9 345.9l0.8 1.0M1306.4 338.7l0.9 -0.7M1302.5 337.8l1.0 1.2M1283.1 377.2l0.8 -0.7M1296.7 354.6l1.3 1.5M1313.9 350.1l1.4 -1.1M1289.3 387.5l0.8 1.0M1310.4 365.2l0.8 -0.6M1294.1 360.0l0.9 1.1M1293.2 378.2l1.1 1.3M1286.0 367.2l1.2 1.4M1281.5 376.5l1.3 1.5M1282.4 388.6l1.2 -1.0M1290.3 380.8l1.4 -1.1M1304.4 347.4l1.2 1.5M1311.0 362.7l1.1 1.4M1303.1 333.9l0.9 -0.8M1291.9 378.8l1.2 1.4M1294.4 365.6l1.0 1.1M1324.4 341.4l0.6 0.8M1325.3 322.8l0.8 1.0M1274.0 380.2l1.7 -1.3M1300.1 374.6l1.3 -1.0M1298.7 347.8l1.4 1.6M1306.7 336.0l1.1 -0.9M1292.0 373.0l1.1 -0.9M1274.8 391.4l0.7 0.8M1295.4 360.7l0.8 1.0M1287.3 366.8l1.2 1.6M1319.8 344.6l1.6 -1.2M1295.9 382.1l1.5 -1.2M1295.8 350.7l1.4 -1.1M1301.5 342.1l1.7 -1.3M1308.2 334.9l0.7 0.9M1321.5 329.3l1.0 1.2M1299.6 365.8l1.4 -1.2M1276.8 371.5l1.0 1.3M1319.6 353.2l1.0 1.3M1296.7 356.5l1.3 -1.1M1310.8 355.3l0.8 1.1M1306.8 367.7l0.8 -0.7M1297.8 355.5l1.6 -1.3M1308.1 342.1l1.2 1.5M1296.6 342.9l1.7 -1.3M1317.2 342.4l1.1 -0.8M1290.5 361.1l1.1 -1.0M1266.5 383.4l1.2 -1.0M1304.8 366.3l1.3 -1.1M1277.9 369.4l1.0 1.2M1288.2 383.5l1.5 -1.2M1322.2 330.2l0.8 -0.7M1292.4 368.5l1.6 -1.4M1297.2 357.1l1.2 1.6M1289.6 362.9l1.4 1.6M1295.9 348.3l0.7 0.9M1309.6 325.3l1.7 -1.4M1301.9 352.6l1.5 -1.2M1288.2 375.9l1.2 1.4M1313.0 320.8l1.1 1.4M1280.5 395.3l1.4 -1.2M1310.0 366.4l1.2 -0.9M1312.9 327.5l1.3 1.6M1304.7 340.0l1.3 1.7M1328.9 323.4l1.4 1.6M1306.3 348.7l0.9 1.2M1302.0 339.1l0.8 -0.7M1315.8 334.5l1.2 -1.0M1273.9 391.7l1.5 -1.2M1316.3 355.4l1.0 1.3M1317.5 330.4l1.2 1.5M1290.0 374.1l1.6 -1.4M1317.3 353.1l0.9 -0.7M1315.8 334.4l1.3 -1.0M1295.9 363.0l0.8 0.9M1269.7 381.9l1.1 -0.8M1290.8 357.9l0.9 -0.8M1322.2 345.9l1.2 -1.0M1287.0 358.0l0.8 -0.7M1277.3 386.3l1.1 1.3M1281.2 378.7l0.9 1.2M1301.6 366.9l1.3 1.7M1275.9 384.6l0.9 1.1M1287.1 390.2l1.6 -1.3M1276.9 376.0l1.1 1.3M1314.9 323.7l1.1 -0.9M1274.2 384.1l0.9 -0.7M1323.8 326.6l1.2 -1.0M1313.5 328.9l1.0 1.2M1283.6 381.8l1.0 -0.8M1285.1 390.0l0.9 -0.7M1320.0 325.0l1.5 -1.2M1274.3 382.9l1.4 1.7M1318.3 343.2l0.9 -0.8M1315.3 328.6l0.7 0.9M1291.3 374.8l0.8 -0.7M1286.1 383.7l1.3 1.6M1315.2 324.9l1.2 1.4M1276.1 383.1l0.9 1.1M1310.9 362.9l1.6 -1.2M1298.6 352.1l1.2 -1.0M1313.3 351.2l0.7 0.8M1319.1 316.6l0.7 0.9M1281.2 383.4l1.1 1.4M1299.0 373.3l0.9 -0.7M1322.0 326.1l1.0 1.3M1274.4 382.3l1.3 1.7M1310.4 364.7l1.3 -1.1M1316.2 343.0l1.0 -0.8M1301.6 341.9l0.9 -0.7M1306.3 345.3l1.3 -1.1M1309.0 332.6l0.9 1.2M1281.5 371.3l1.0 -0.9M1305.7 334.7l1.0 1.3M1324.7 320.9l1.1 1.3M1293.2 356.2l1.3 1.6M1302.4 337.9l1.5 -1.2M1302.2 369.0l1.0 -0.8M1294.7 359.4l1.1 1.4M1319.1 316.5l0.9 1.1M1298.1 346.9l1.3 -1.1M1325.9 328.6l1.7 -1.3M1301.3 354.8l0.9 1.0M1283.6 379.1l0.9 -0.8M1304.6 342.7l1.1 1.4M1320.0 343.2l1.2 1.5M1308.9 326.5l1.0 -0.8M1315.0 353.3l1.2 1.5M1291.5 359.8l0.7 0.9M1291.6 380.3l1.6 -1.3M1289.1 352.6l1.2 -1.0M1301.3 345.9l0.9 1.1M1279.2 382.3l0.9 1.1M1328.5 332.0l1.2 -1.0M1324.2 339.9l1.3 -1.0M1298.5 356.8l1.1 1.4M1309.5 352.5l0.8 -0.7M1301.5 361.4l1.3 1.6M1296.3 351.6l1.4 -1.1M1308.1 338.5l0.9 1.1M1306.2 357.3l1.3 1.5M1304.1 344.6l1.7 -1.4M1275.3 377.8l1.1 1.3M1302.6 348.2l0.7 0.9M1298.8 357.2l0.8 -0.7M1318.4 320.0l0.8 -0.6M1290.4 378.4l0.8 -0.7M1305.8 334.8l0.7 0.8M1284.5 389.9l1.6 -1.2M1309.4 362.5l0.9 1.2M1317.3 335.1l1.0 -0.7M1323.3 347.9l1.1 -0.9M1299.6 347.0l1.1 -1.0M1289.8 352.8l0.9 1.1M1311.5 321.7l0.9 1.0M1301.0 352.6l1.3 1.5M1312.4 345.0l1.4 1.6M1277.1 386.4l1.4 -1.1M1303.7 350.3l1.4 1.7M1291.0 357.3l0.9 -0.7M1315.3 316.2l1.2 1.4M1321.1 341.8l1.4 -1.2M1276.6 374.6l0.9 -0.7M1272.1 373.6l0.8 1.1M1320.8 352.4l1.1 1.3M1327.0 329.6l1.1 -0.9M1311.1 352.1l1.4 1.7M1287.4 367.2l0.9 -0.8M1281.9 365.5l1.0 -0.8M1290.8 365.6l1.2 -0.9M1274.0 375.3l1.1 1.3M1296.9 358.5l1.7 -1.3M1326.8 324.4l1.5 -1.2M1302.9 373.1l1.7 -1.4M1316.1 342.4l1.3 1.7M1310.5 346.5l1.2 1.5M1306.3 351.7l0.7 0.8M1292.4 356.3l1.4 1.6M1274.6 379.8l1.0 -0.8M1339.2 334.2l1.3 1.7M1346.9 350.4l2.1 -1.7M1347.7 349.2l2.4 -1.9M1354.8 353.8l1.5 -1.2M1349.5 358.4l1.1 1.4M1350.9 347.7l1.8 2.1M1334.5 342.1l1.4 1.6M1340.9 337.4l1.6 -1.3M1335.8 349.0l1.9 -1.5M1347.3 348.4l1.4 -1.1M1352.2 355.5l2.4 -1.9M1344.1 337.1l1.4 1.6M1341.1 354.8l1.7 -1.3M1341.3 346.4l1.9 -1.5M1344.5 359.1l2.4 -2.1M1335.6 340.1l1.1 1.4M1345.3 340.4l2.1 -1.8M1359.2 351.1l1.3 -1.1M1353.1 351.3l1.7 -1.4M1355.5 346.4l1.2 -0.9M1350.0 348.1l1.5 1.9M1345.1 350.3l1.6 2.0M1351.9 361.3l1.3 -1.0M1351.2 343.9l1.9 -1.5M1347.0 355.8l1.6 -1.2M1348.5 353.6l1.9 2.3M1353.9 348.8l1.3 -1.0M1349.6 364.5l1.4 1.6M1350.1 345.9l1.1 1.3M1359.3 355.8l1.4 -1.1M1346.0 352.4l2.1 -1.7M1359.6 355.2l1.8 2.2M1359.9 352.7l2.1 -1.7M1352.0 365.0l1.5 1.9M1349.9 360.1l1.3 -1.1M1342.3 346.5l2.2 -1.9M1343.1 357.0l1.9 2.5M1339.3 338.7l1.4 1.8M1337.0 351.2l1.2 1.6M1359.2 353.8l1.5 -1.2M1342.1 338.9l1.8 -1.5M1353.8 345.6l1.5 1.8M1354.3 349.0l1.4 -1.2M1343.0 350.3l1.3 1.6M1336.4 344.5l1.4 1.8M1344.1 344.5l0.9 1.2M1340.0 349.4l1.3 1.5M1349.6 358.3l1.8 2.4M1352.2 355.4l1.7 -1.3M1342.0 344.3l1.9 2.3M1342.4 352.6l1.7 -1.4M1354.5 354.8l1.8 2.4M1347.4 364.5l2.3 -1.8M1335.5 338.8l1.9 2.4M1344.3 345.5l1.8 2.2M1349.7 356.6l2.4 -2.0M1362.3 352.4l1.1 1.3M1341.0 344.2l1.4 1.8M1349.2 358.0l1.6 2.0M1344.0 340.7l1.9 -1.6M1363.7 354.1l1.3 -1.0M1339.9 355.5l1.2 -0.9M1352.5 347.7l2.1 -1.6M1351.3 358.4l2.0 2.5M1339.5 349.3l1.2 -0.9M1345.0 350.5l1.6 1.9M1353.0 354.3l1.6 -1.3M1358.6 349.8l1.2 -1.0M1352.6 352.7l2.1 -1.7M1342.9 351.8l1.5 -1.2M1353.1 358.7l1.4 1.6M1362.9 353.8l1.1 1.3M1352.2 343.7l1.8 2.3M1342.6 340.0l1.3 1.7M1362.9 355.1l1.5 -1.2M1338.9 344.3l1.3 1.6M1352.3 342.0l2.1 2.4M1335.3 343.8l1.3 -1.1M1351.0 347.6l1.6 1.9M1360.0 357.6l1.0 1.2M1333.4 343.4l1.9 2.4M1357.9 356.0l1.0 1.2M1349.9 357.8l2.1 -1.8M1345.1 338.1l1.7 2.0M1351.7 352.7l2.5 -2.0M1339.9 343.5l1.0 1.2M1348.9 352.6l2.1 -1.6M1344.2 343.0l1.4 1.7M1343.8 345.4l1.4 1.7M1361.3 355.4l1.5 -1.2M1354.0 356.8l2.0 2.4M1355.1 345.9l1.5 1.9M1348.9 344.8l2.4 -2.0M1346.6 355.9l1.8 -1.4M1338.4 353.5l1.7 2.2M1353.4 360.7l1.0 1.2M1350.3 353.6l2.5 -2.1M1362.3 350.2l1.5 1.8M1345.9 355.9l2.2 -1.9M1341.4 344.2l1.8 2.3M1339.1 337.1l1.7 -1.3M1354.4 347.5l1.5 1.8M1353.8 344.7l1.5 1.8M1351.5 351.8l2.3 -1.8M1340.1 343.3l1.2 1.5M1344.8 361.0l2.0 -1.6M1345.4 353.1l1.2 1.5M1343.5 351.7l2.0 2.4M1333.3 347.4l1.3 1.7M1350.9 347.9l1.4 1.8M1344.6 348.0l1.9 2.4M1343.8 338.5l2.1 -1.8M1353.4 359.1l1.7 -1.4M1341.7 347.0l1.7 -1.5M1353.7 358.1l1.8 -1.5M1349.2 357.5l1.9 2.2M1342.1 351.2l1.2 -0.9M1343.8 355.0l1.2 1.6M1348.2 347.9l1.3 -1.0M1338.9 346.7l1.8 -1.4M1341.0 338.1l1.5 -1.1M1345.9 358.0l2.1 -1.6M1345.8 339.1l1.1 1.5M1344.6 357.2l1.2 1.4M1332.2 348.7l2.0 -1.7M1358.7 349.5l1.0 1.2M1347.3 356.9l2.1 -1.6M1358.2 350.6l1.1 1.4M1348.3 349.5l1.4 -1.2M1338.6 352.2l1.3 1.6M1341.1 340.9l1.6 1.9M1346.5 357.1l1.4 1.8M1348.7 342.1l1.3 1.6M1337.4 343.2l1.5 -1.3M1337.3 348.0l1.8 2.1M1350.2 344.1l1.9 -1.6M1345.8 340.4l1.8 2.1M1358.2 358.5l1.7 -1.5M1357.4 354.1l1.7 -1.5M1344.6 357.6l1.7 -1.4M1262.2 347.0l1.4 -1.2M1271.3 352.3l0.9 -0.8M1250.2 345.3l1.0 -0.8M1248.1 346.3l0.8 1.0M1249.9 341.4l0.9 -0.7M1275.6 351.5l1.3 1.5M1259.4 339.9l1.2 1.5M1242.8 358.7l0.9 -0.7M1221.3 356.7l1.0 -0.8M1267.9 334.1l1.1 -0.9M1218.3 358.6l1.4 -1.1M1237.6 366.1l1.0 1.2M1242.2 348.2l0.7 0.8M1225.3 353.7l0.9 -0.7M1264.4 340.1l1.7 -1.3M1261.0 332.9l0.6 0.8M1218.3 354.4l1.1 -0.9M1263.5 359.3l0.9 -0.8M1262.9 337.0l1.6 -1.2M1268.6 365.7l1.1 1.3M1240.0 359.7l1.7 -1.3M1263.1 357.5l1.4 -1.1M1266.6 363.3l1.3 1.5M1228.6 350.4l0.8 1.0M1257.8 348.6l1.4 -1.1M1268.3 348.9l0.9 -0.7M1257.8 371.4l1.2 -0.9M1267.3 348.4l1.1 1.4M1225.3 354.4l0.7 0.9M1269.4 358.6l1.0 -0.9M1272.2 348.0l1.1 1.3M1223.7 360.6l0.7 0.8M1240.7 344.8l0.8 0.9M1254.6 369.9l0.9 1.2M1265.9 356.8l1.3 1.6M1270.0 335.4l1.0 -0.8M1262.4 359.8l1.3 1.7M1231.8 349.5l1.3 -1.0M1238.8 359.3l1.1 1.4M1219.6 360.2l1.2 -1.0M1259.2 354.8l1.0 1.2M1262.2 364.3l0.8 -0.6M1246.1 331.3l1.7 -1.3M1224.9 357.2l1.3 -1.1M1255.4 341.8l1.5 -1.2M1257.0 365.7l1.1 1.4M1247.3 331.9l1.1 1.3M1248.6 361.6l1.6 -1.3M1238.8 360.9l0.8 1.0M1243.8 334.7l0.8 1.0M1236.1 366.4l1.2 -1.0M1244.2 368.4l1.4 -1.1M1249.7 359.2l1.2 1.6M1263.7 342.1l0.9 1.1M1249.3 343.8l1.4 -1.1M1249.6 362.1l1.1 -0.8M1220.2 354.2l1.2 1.5M1268.6 361.5l1.4 1.6M1256.0 360.6l1.2 1.5M1268.9 348.8l1.3 -1.0M1271.0 354.7l1.3 -1.0M1220.1 348.3l1.0 1.2M1252.4 349.0l1.3 -1.0M1265.5 360.1l1.3 1.6M1225.3 361.1l1.5 -1.2M1262.8 367.7l1.4 -1.1M1224.0 362.5l1.5 -1.1M1260.8 365.5l1.4 -1.1M1254.4 371.3l1.1 -0.8M1266.5 347.1l1.4 -1.2M1229.7 350.1l1.2 1.5M1243.9 355.9l1.5 -1.3M1249.9 351.8l1.2 -1.0M1255.8 345.1l0.9 1.1M1267.3 354.0l0.7 0.8M1217.6 353.5l1.2 -1.0M1241.5 360.9l1.6 -1.3M1220.6 351.3l0.7 0.9M1254.9 339.4l1.3 -1.1M1241.5 343.4l0.9 -0.8M1243.6 338.5l1.2 1.4M1264.7 339.9l1.5 -1.2M1263.0 373.6l1.6 -1.4M1261.6 359.0l1.0 -0.8M1255.6 356.1l1.1 -0.8M1226.9 345.5l1.3 1.6M1264.6 346.3l1.6 -1.2M1264.8 352.2l1.7 -1.3M1266.1 350.9l1.3 1.5M1269.9 353.5l0.8 1.0M1260.7 371.9l1.3 1.7M1265.1 362.4l0.7 0.9M1229.4 357.1l1.1 -0.9M1228.5 356.7l1.7 -1.3M1237.3 354.9l1.0 1.2M1275.8 349.4l1.0 1.3M1264.1 355.2l1.1 1.5M1226.5 358.8l1.3 1.6M1261.2 350.6l1.3 1.6M1223.4 352.1l0.9 1.1M1262.9 341.0l1.4 -1.2M1245.3 347.6l1.4 1.6M1265.0 331.7l1.0 1.3M1260.8 338.0l1.3 1.5M1254.9 344.2l1.0 1.3M1269.6 355.9l1.5 -1.3M1260.6 359.3l1.1 1.4M1263.0 330.6l1.2 1.6M1229.1 361.4l1.2 1.5M1221.2 354.2l1.4 -1.2M1261.9 369.1l1.5 -1.3M1247.3 355.7l0.9 1.1M1223.1 360.7l1.1 1.4M1244.7 348.0l1.1 1.3M1269.1 362.1l0.7 0.8M1269.6 348.9l1.3 1.6M1255.2 343.0l0.8 1.0M1238.1 344.5l0.7 0.9M1257.3 352.1l1.4 -1.1M1274.1 344.3l1.2 1.5M1249.3 335.6l1.6 -1.2M1242.9 345.8l0.8 -0.7M1249.5 358.9l1.0 1.3M1274.7 354.2l1.5 -1.2M1256.7 340.7l1.5 -1.2M1261.3 349.3l0.7 0.9M1254.6 358.3l0.9 -0.7M1263.6 341.9l1.0 -0.8M1256.5 357.4l1.1 1.4M1257.3 357.7l1.4 -1.1M1320.7 286.3l0.9 1.1M1317.3 293.9l0.7 0.9M1316.5 295.6l0.7 0.8M1320.2 284.1l1.0 -0.8M1320.0 285.5l1.7 -1.3M1316.6 293.9l0.9 1.1M1315.6 294.9l0.8 1.1M1315.5 297.4l1.0 -0.8M1300.8 431.1l1.4 -1.2M1305.8 430.3l1.4 1.6M1302.4 425.3l1.0 1.2M1315.3 432.4l0.7 0.8M1308.0 426.7l0.7 0.9M1307.1 436.6l0.7 0.9M1307.6 435.2l1.5 -1.3M1310.3 435.5l0.7 0.8M1312.4 435.8l0.9 -0.7M1302.7 434.5l1.6 -1.3M1306.9 439.3l0.9 1.0M1304.5 424.7l0.8 -0.7M1307.1 430.9l1.3 1.7M1306.9 427.6l1.5 -1.2M1304.6 429.7l1.1 -0.9M1308.8 438.3l1.0 -0.8M1309.5 430.2l1.0 1.3M1301.6 424.9l0.7 0.9M1301.5 423.4l1.3 -1.0M1303.1 422.9l1.0 1.3M1300.4 430.6l1.5 -1.3M1305.4 427.3l1.4 -1.2M1306.6 432.0l1.3 -1.0M1314.5 433.5l1.0 -0.7M1309.8 430.1l1.7 -1.3M1311.7 434.9l1.2 -1.0M1307.1 435.0l1.2 1.4M1306.9 426.5l1.3 1.7M1308.5 428.7l0.7 0.9M1305.5 435.9l0.9 1.1M1302.9 425.1l1.0 -0.8M1307.7 441.2l1.3 -1.1M1307.1 430.8l1.1 -0.9M1305.1 437.1l0.8 1.1M1310.9 434.9l1.2 1.5M1310.0 434.0l1.2 1.4M1310.6 438.2l0.8 -0.7M1309.2 429.9l1.3 -1.1M1304.9 431.5l0.9 1.1M1303.7 426.3l0.8 -0.7M1312.7 436.4l0.9 1.1M1306.4 426.9l0.8 -0.6M1310.6 432.6l0.7 0.9M1311.8 432.0l1.3 -1.0M1304.0 434.1l1.2 1.4M1272.7 384.5l1.0 -0.8M1292.6 399.6l1.7 -1.3M1277.5 394.2l1.1 -0.8M1266.6 380.7l1.0 1.2M1289.0 402.2l1.1 1.4M1282.4 400.8l0.9 -0.7M1285.8 391.1l0.7 0.8M1288.3 394.7l1.5 -1.2M1279.7 397.2l1.0 -0.9M1286.7 403.1l1.4 -1.1M1268.4 382.4l0.7 0.8M1292.6 395.4l1.0 1.1M1278.7 388.5l0.7 0.9M1279.9 394.1l0.7 0.9M1279.9 398.2l1.2 1.4M1281.9 400.8l0.6 0.8M1292.1 399.0l1.7 -1.3M1293.5 398.6l1.4 -1.2M1290.3 396.7l1.6 -1.3M1271.2 389.0l1.6 -1.3M1277.2 388.2l1.6 -1.4M1286.0 402.7l1.2 1.5M1292.7 396.6l0.7 0.8M1290.3 401.9l1.0 -0.8M1289.8 398.4l1.4 -1.1M1280.1 391.5l1.2 1.5M1265.4 383.8l1.6 -1.3M1270.5 391.6l0.9 1.2M1285.8 404.1l1.2 -1.0M1294.6 395.5l0.9 -0.7M1280.5 390.2l1.3 1.6M1270.8 390.0l1.1 -0.9M1286.8 394.4l1.0 1.2M1273.6 394.2l1.5 -1.2M1278.8 389.3l1.1 1.5M1270.7 387.4l0.9 1.1M1281.1 399.5l0.7 0.8M1284.8 389.2l1.3 1.5M1282.8 400.7l1.6 -1.3M1265.3 380.8l1.0 1.2M1285.8 401.7l1.2 -0.9M1281.8 393.2l0.8 -0.6M1283.4 390.4l0.9 1.1M1272.3 384.8l0.7 0.9M1276.2 391.0l0.9 1.1M1273.9 390.2l1.2 1.6M1280.3 386.7l1.0 1.3M1277.7 389.8l1.2 -0.9M1288.5 401.5l1.1 1.4M1294.4 394.7l0.6 0.8M1275.9 395.8l1.3 1.7M1287.8 395.8l1.1 1.4M1291.4 396.1l1.4 -1.1M1283.2 396.7l0.9 1.0M1280.5 393.5l1.1 -0.9M1275.7 393.2l1.3 1.7M1267.4 387.3l1.4 -1.1M1268.5 387.7l0.8 1.0M1288.8 404.7l1.6 -1.4M1281.2 398.7l1.0 1.2M1264.8 381.8l0.9 -0.7M1269.6 391.8l0.7 0.9M1284.8 398.4l1.7 -1.3M1275.0 390.2l0.9 1.2M1269.8 384.5l1.1 -0.9M1279.2 395.6l1.3 1.6M1287.0 393.9l0.9 -0.8M1296.2 394.4l0.8 0.9M1286.2 393.9l1.6 -1.4M1277.1 396.9l0.9 1.1M1146.3 382.8l1.1 -0.9M1147.6 389.8l0.8 -0.6M1140.1 393.3l1.0 -0.8M1143.4 382.1l1.6 -1.4M1144.0 394.2l0.6 0.8M1149.4 387.7l1.3 1.6M1141.3 395.0l1.1 1.4M1142.9 391.6l0.8 1.0M1143.9 392.4l1.0 -0.8M1139.1 382.9l1.3 1.7M1146.9 382.0l1.4 -1.1M1149.1 378.9l1.4 -1.2M1140.6 395.7l1.6 -1.2M1150.5 376.2l1.2 -1.0M1151.9 380.6l1.3 -1.1M1148.6 382.2l1.4 1.6M1151.3 380.6l0.8 0.9M1143.4 394.0l1.0 -0.8M1138.2 385.1l1.3 1.5M1147.9 387.5l1.0 1.1M1140.5 382.6l0.7 0.9M1136.2 387.9l1.3 1.7M1145.4 379.7l1.5 -1.2M1139.3 390.4l1.3 -1.0M1147.6 378.6l0.8 0.9M1139.8 398.3l1.0 -0.8M1134.8 386.4l1.2 1.4M1147.4 390.3l1.4 1.6M1144.2 432.7l0.8 -0.6M1144.2 430.5l0.9 1.1M1142.6 429.0l1.3 1.7M1143.3 432.8l1.2 -0.9M1142.5 431.2l1.6 -1.3M1143.8 428.0l1.2 1.4M1140.8 428.2l0.8 0.9M1143.2 427.7l1.0 1.3M1040.6 598.5l1.0 -0.8M1049.1 585.6l1.1 -0.9M1039.9 594.3l1.2 1.6M1059.0 573.5l1.2 1.5M1058.6 596.1l1.0 1.2M1057.3 594.3l0.7 0.9M1041.7 594.6l0.8 1.0M1047.1 601.5l0.8 -0.7M1055.8 589.6l1.6 -1.2M1064.1 575.7l0.7 0.9M1056.7 592.5l1.7 -1.4M1066.0 581.4l0.9 -0.7M1046.8 600.1l0.7 0.9M1037.4 602.7l1.4 -1.2M1061.1 574.4l0.8 1.0M1043.4 602.6l1.2 1.5M1049.4 582.9l0.9 1.1M1054.3 595.1l0.9 -0.7M1047.1 595.2l1.0 -0.8M1041.7 599.1l1.5 -1.1M1050.4 579.5l1.3 1.7M1051.3 582.5l1.5 -1.3M1061.2 587.8l1.2 1.4M1057.5 587.9l0.9 -0.7M1058.4 578.4l0.8 1.0M1055.3 595.8l1.3 -1.1M1060.8 580.1l1.1 -0.9M1057.8 597.8l0.9 -0.8M1049.4 595.7l1.3 1.6M1063.0 587.5l1.2 -0.9M1057.7 583.5l0.7 0.8M1043.8 600.6l1.3 1.6M1060.2 589.8l0.9 -0.7M1047.6 586.1l1.4 -1.1M1038.5 599.6l1.4 -1.2M1059.2 582.6l1.2 1.4M1052.7 579.3l0.7 0.9M1040.3 592.6l1.3 -1.0M1050.7 600.9l0.7 0.9M1043.3 585.6l0.9 1.1M1040.8 601.1l0.8 1.0M1041.6 599.3l1.2 -1.0M1040.2 592.7l1.2 1.5M1051.4 585.8l1.5 -1.3M1063.2 583.2l1.6 -1.3M1086.1 598.3l0.9 1.2M1088.9 606.9l1.0 1.2M1083.8 605.7l0.9 -0.7M1104.1 602.1l1.6 -1.3M1096.0 602.8l1.5 -1.2M1103.6 604.0l1.7 -1.3M1084.2 601.1l0.8 -0.6M1086.9 598.0l1.4 1.7M1099.1 603.8l1.0 1.1M1089.9 603.4l0.6 0.8M1102.9 605.1l0.7 0.8M1099.8 601.4l1.1 1.4M1099.9 608.9l1.4 -1.1M1088.7 606.1l1.4 -1.2M1084.6 602.0l1.2 1.4M1099.3 607.5l0.9 1.1M1101.5 602.8l1.0 1.2M1095.0 598.2l1.3 1.6M1093.4 602.2l1.0 -0.8M1105.5 603.3l0.8 -0.6M1099.1 603.2l1.4 -1.2M1093.0 609.1l1.0 -0.9M1087.1 599.1l1.3 1.7M1097.8 609.1l0.7 0.9M1091.1 608.1l1.3 1.5M1088.5 607.3l1.3 1.5M1084.7 603.0l0.8 -0.7M1090.9 605.7l1.2 -1.0M1097.7 608.9l1.5 -1.2M1091.9 600.2l1.0 1.3M1075.2 547.4l0.7 0.9M1087.5 515.6l1.4 -1.2M1078.7 532.5l0.8 0.9M1085.9 529.4l1.0 -0.9M1082.4 529.7l1.2 -1.0M1088.4 518.6l1.3 -1.0M1068.4 551.0l1.6 -1.3M1073.7 549.5l0.8 1.0M1078.4 540.2l1.0 1.3M1071.5 548.4l1.3 1.6M1075.9 537.0l0.9 1.1M1074.8 546.4l1.3 1.6M1081.1 529.0l0.7 0.9M1077.4 534.0l1.3 -1.1M1152.9 508.8l0.8 1.0M1152.9 508.7l1.2 1.5M1149.4 504.6l1.5 -1.3M1152.6 513.0l1.0 1.3M1154.9 512.7l1.4 -1.1M1149.9 504.9l1.4 -1.1M1122.3 525.7l1.1 -0.8M1126.8 525.8l1.2 -0.9M1125.5 526.9l0.8 1.0M1128.1 527.0l0.8 1.0M1128.1 526.6l0.7 0.8M1129.4 525.9l0.9 -0.8M1124.5 524.9l1.3 1.6M1122.9 526.2l1.1 -0.9M1157.5 691.4l0.9 1.0M1157.2 682.1l1.1 -0.8M1166.2 683.5l1.0 1.2M1154.7 697.5l1.0 -0.8M1160.5 682.2l0.6 0.8M1159.1 698.4l0.9 1.1M1163.6 684.2l1.3 -1.0M1153.9 688.9l0.8 1.0M1154.3 691.9l0.8 1.0M1161.1 690.7l0.9 -0.7M1161.3 692.7l0.9 1.1M1160.6 697.3l0.6 0.8M1154.8 688.2l0.8 -0.7M1156.9 681.1l0.9 -0.7M1165.0 689.3l1.0 -0.8M1163.6 683.7l0.9 -0.7M1164.2 689.4l0.6 0.7M1158.6 679.6l0.6 0.7M1164.5 690.0l0.6 0.7M1161.3 683.5l0.7 0.9M1157.6 680.3l1.3 -1.1M1155.8 692.1l1.2 1.4M1159.3 690.5l0.9 -0.8M1161.4 691.8l0.6 0.7M1162.0 687.4l1.1 1.4M1160.4 686.7l0.8 1.1M1162.6 690.6l1.0 -0.8M1151.6 693.1l1.3 -1.0M1162.7 684.2l1.1 1.4M1161.0 687.7l0.9 -0.7M1156.0 690.6l1.1 1.4M1158.6 690.9l1.0 1.2M1161.8 690.2l1.1 -0.9M1154.2 687.7l0.9 -0.7M1161.6 682.2l1.2 -1.0M1154.4 691.0l1.0 -0.8M1152.3 689.5l1.3 -1.0M1154.8 689.4l1.1 1.3M1164.6 685.7l0.6 0.8M1163.7 691.7l0.6 0.8M1159.5 682.3l1.3 -1.1M1165.8 684.1l0.7 -0.6M1155.8 698.7l1.4 -1.1M1163.8 687.3l0.6 0.8M1155.0 683.8l0.9 1.1M1161.8 687.5l0.8 -0.7M1155.1 696.2l0.8 1.0M1158.4 680.1l0.8 1.0M1154.3 693.5l1.0 1.3M1162.1 680.6l0.8 1.0M1154.3 696.5l0.9 1.2M1160.3 694.6l0.6 0.8M1158.3 688.5l0.7 0.8M1155.6 693.5l0.8 -0.6M1158.3 692.3l1.3 -1.0M1159.5 687.3l0.7 0.8M1159.9 682.5l0.6 0.7M1156.2 694.0l1.1 -0.9M1155.7 690.1l0.7 0.9M1166.0 684.5l1.0 1.3M1161.8 693.4l0.8 -0.7M1165.8 686.6l1.1 1.3M1157.9 678.1l1.2 1.4M1163.6 694.2l0.6 0.8M1155.7 682.7l0.8 1.0M1162.2 687.4l0.8 -0.6M1161.0 692.9l0.7 0.9M1156.0 686.8l1.1 1.4M1159.5 694.6l1.3 -1.0M1156.3 696.3l1.1 1.3M1159.4 684.8l1.1 1.3M1150.8 693.6l0.9 1.2M1152.3 691.4l1.2 -1.0M1150.8 690.9l1.0 1.1M1155.9 699.2l1.0 -0.8M1154.9 689.1l0.6 0.8M1155.6 686.5l0.7 0.9M1156.0 684.4l1.3 -1.1M1158.2 692.9l0.8 1.0M1154.1 695.4l0.9 -0.7M1160.8 689.2l0.8 1.0M1161.0 695.7l0.9 1.1M1162.1 693.2l0.8 1.1M1165.1 690.8l1.0 1.2M1167.1 686.6l1.3 -1.0M1155.4 694.3l0.6 0.8M1166.4 684.6l0.9 1.0M1164.1 683.4l0.9 -0.7M1152.4 688.5l0.9 -0.7M1159.6 685.3l1.3 -1.0M1167.8 687.0l1.1 -1.0M1154.6 687.0l1.2 -1.0M1155.0 689.9l1.1 1.3M1156.9 681.5l0.8 -0.7M1159.4 687.5l1.0 -0.9M1165.3 692.1l1.0 -0.8M1154.7 694.3l0.7 0.9M1163.5 683.5l0.9 1.1M1156.5 689.6l1.0 1.1M1162.8 683.3l0.8 1.1M1153.3 695.5l0.7 -0.6M1156.5 689.4l0.9 1.0M1159.8 682.3l1.0 -0.8M1153.9 696.0l0.8 1.0M1156.0 688.3l1.4 -1.1M1159.2 683.5l1.0 -0.9M1163.2 688.6l1.1 1.4M1161.3 681.3l1.4 -1.1M1153.1 692.1l1.2 -0.9M1163.0 688.6l1.2 -1.0M1155.4 692.6l1.0 1.3M1158.9 698.0l0.9 -0.8M1153.5 686.0l0.9 1.1M1161.4 698.1l0.9 -0.7M1157.6 692.2l1.1 -0.8M1164.3 683.7l0.8 -0.6M1157.6 680.3l1.4 -1.2M1159.3 692.8l1.3 -1.1M1157.5 681.0l1.0 1.2M1152.3 689.9l1.0 1.2M1159.6 700.8l0.9 -0.7M1154.1 689.8l1.1 -1.0M1156.2 685.4l0.6 0.8M1159.0 698.4l1.0 1.1M1164.6 684.9l1.0 1.2M1152.4 694.0l0.8 1.0M1159.6 692.3l1.3 -1.1M1162.7 691.8l0.8 1.1M1161.0 680.9l0.8 1.0M1159.9 691.0l0.8 -0.6M1163.9 688.2l1.0 -0.8M1156.9 684.3l0.7 -0.6M1168.2 685.5l1.0 -0.8M1154.2 693.7l0.8 1.0M1158.4 681.5l0.8 -0.7M1151.6 691.8l1.1 1.4M1157.9 682.9l1.0 1.2M1162.7 688.9l1.1 1.3M1151.5 691.8l0.8 1.0M1159.4 694.7l1.2 1.4M1158.1 684.1l1.3 -1.1M1158.3 698.0l0.8 -0.7M1159.4 698.8l1.0 -0.8M1160.8 682.0l0.8 0.9M1154.6 691.8l0.7 0.9M1155.4 694.6l0.7 0.8M1161.0 689.4l1.3 -1.0M1155.4 697.9l1.1 1.4M1158.0 700.6l0.9 -0.7M1163.2 687.0l0.7 0.9M1159.8 692.9l0.8 -0.6M1154.7 693.8l1.0 1.2M1160.5 686.5l0.9 -0.7M1163.1 695.2l0.7 -0.6M1161.0 698.5l0.6 0.8M1153.2 690.4l1.1 -0.9M1158.6 698.9l0.9 -0.8M1157.2 697.4l1.3 -1.0M1161.6 695.6l0.9 -0.7M1161.9 686.2l0.7 0.8M1156.1 685.2l1.2 -0.9M1154.3 690.0l0.8 1.0M1152.3 692.0l1.0 1.2M1155.4 698.4l1.3 -1.1M1159.5 681.4l1.1 1.3M1160.5 684.9l0.7 0.8M1152.9 687.5l0.6 0.8M1154.1 687.6l1.3 -1.0M1161.5 689.7l1.2 -1.0M1164.6 691.6l1.2 -1.0M1160.9 693.2l0.8 -0.6M1155.8 688.5l1.1 -0.9M1157.9 701.2l0.9 -0.7M1163.4 686.7l0.8 0.9M1155.6 695.5l0.8 -0.6M1167.1 686.1l0.9 1.2M1163.1 687.2l1.1 -0.9M1158.5 681.9l0.8 -0.6M1162.1 694.2l0.9 1.2M1160.1 691.0l0.9 1.1M1158.1 693.7l1.3 -1.1M1160.2 696.2l0.6 0.8M1154.1 685.3l0.9 1.1M1158.2 680.8l0.9 1.1M1160.7 697.9l1.1 -0.9M1163.5 691.9l1.1 -0.9M1156.0 695.8l1.3 -1.0M1159.3 700.5l1.0 -0.8M1161.0 685.6l0.7 0.9M1162.5 688.4l0.9 1.1M1161.1 690.4l0.9 1.1M1156.4 680.9l0.8 1.0M1160.0 684.9l0.9 1.2M1161.4 684.9l1.0 1.2M1158.9 689.7l0.9 -0.7M1155.9 693.9l1.0 -0.9M1159.3 682.9l0.9 -0.7M1156.0 691.5l1.1 1.4M1161.2 681.5l1.3 -1.0M1156.0 694.8l1.1 1.3M1161.4 698.3l0.8 -0.6M1154.8 691.2l0.8 1.0M1166.9 685.0l1.3 -1.1M1160.5 691.3l1.0 -0.8M1156.6 681.4l0.6 0.8M1158.5 684.3l0.8 -0.7M1168.2 685.8l1.0 1.3M1157.6 691.0l1.1 1.3M1160.5 698.3l0.6 0.7M1156.1 688.6l1.3 -1.0M1161.6 686.7l0.6 0.7M1154.9 683.7l0.6 0.8M1153.7 689.3l1.4 -1.1M1159.0 681.6l0.8 1.0M1161.8 689.7l1.3 -1.1M1151.2 693.9l0.8 1.0M1157.0 680.9l1.0 1.3M1153.2 688.8l0.9 1.1M1156.0 683.1l0.9 1.1M1154.3 694.0l1.1 1.4M1159.6 689.6l0.9 1.1M1153.3 687.1l1.4 -1.1M1153.0 688.6l1.1 1.4M1162.1 682.5l1.0 1.3M1156.0 682.8l1.0 1.1M1160.2 685.1l1.2 -1.0M1150.7 694.5l0.7 -0.6M1164.2 687.3l1.3 -1.1M1162.9 693.7l0.9 -0.7M1158.6 685.7l1.3 -1.1M1194.5 689.9l2.4 -2.0M1202.0 697.1l1.8 2.3M1195.2 699.8l2.2 -1.8M1182.6 691.9l1.8 -1.5M1187.7 698.6l1.6 2.0M1181.8 689.9l1.2 1.4M1187.2 692.2l1.9 2.3M1186.0 703.1l1.9 2.3M1190.4 697.8l1.5 -1.2M1174.6 683.1l1.3 1.5M1199.3 694.2l1.7 -1.3M1180.2 690.4l2.0 -1.7M1182.3 691.5l2.6 -2.0M1196.2 700.6l1.2 1.5M1179.9 695.7l1.5 1.8M1193.2 704.3l2.3 -1.8M1178.9 688.7l1.5 1.8M1204.5 694.6l1.2 1.4M1212.5 695.4l2.6 -2.2M1186.5 697.3l1.8 2.3M1195.5 700.1l1.7 -1.3M1180.5 690.8l1.3 1.7M1184.7 688.7l1.9 -1.6M1178.8 688.9l1.8 2.2M1183.4 687.2l1.5 -1.2M1202.3 689.9l1.8 2.2M1188.9 700.3l1.7 2.1M1205.3 697.4l2.3 -1.9M1182.3 696.3l1.6 1.9M1191.0 695.7l2.3 -1.9M1193.4 694.6l2.3 -1.8M1201.2 694.1l2.0 2.6M1194.0 694.4l1.8 2.2M1195.8 689.9l1.2 1.6M1193.4 689.0l1.5 1.8M1192.5 699.3l1.5 -1.2M1185.1 690.9l1.4 1.8M1194.2 702.2l1.2 1.4M1182.8 690.5l1.2 1.6M1198.0 695.3l1.2 1.4M1204.3 693.2l2.2 -1.7M1189.1 694.8l1.4 1.6M1182.3 690.6l2.0 -1.7M1194.4 701.0l1.7 -1.4M1188.2 702.4l1.6 2.0M1188.4 703.1l2.1 2.5M1175.0 685.8l2.0 2.5M1193.4 695.3l1.6 -1.2M1183.0 705.0l1.7 -1.4M1180.3 688.2l1.2 1.6M1181.9 703.4l1.9 -1.4M1191.8 690.4l2.3 -1.9M1178.8 694.3l2.1 2.6M1180.3 689.9l1.4 1.8M1182.5 705.7l1.7 -1.4M1186.4 700.3l2.4 -1.9M1194.2 695.8l2.4 -1.8M1177.3 690.4l1.2 1.5M1177.6 685.0l1.7 -1.4M1205.1 693.5l2.1 2.7M1178.3 687.6l1.3 1.5M1173.0 684.2l2.6 -2.1M1186.8 690.0l2.6 -2.2M1180.6 688.7l1.9 -1.6M1177.7 689.5l2.2 -1.8M1204.1 691.5l1.5 1.9M1182.8 698.1l2.5 -2.0M1201.8 693.6l1.5 1.9M1180.9 696.7l1.4 1.8M1195.3 696.5l2.4 -2.0M1185.3 688.4l1.7 2.0M1189.3 704.0l1.7 -1.3M1183.4 705.0l2.6 -2.0M1187.2 692.9l1.9 2.2M1189.3 688.0l1.2 1.5M1182.5 688.7l1.1 1.5M1211.7 695.5l2.1 -1.6M1174.2 683.0l2.0 2.6M1181.5 697.6l1.6 2.1M1188.4 688.4l1.3 1.6M1198.1 700.2l2.0 -1.7M1189.5 695.3l1.2 1.4M1174.8 684.8l2.1 2.5M1184.5 706.1l1.6 1.9M1180.7 698.3l1.8 -1.5M1187.0 687.5l1.9 -1.6M1182.4 685.8l1.2 1.6M1193.8 690.1l1.8 2.2M1192.6 688.9l1.6 1.9M1180.0 689.5l1.5 1.9M1199.2 694.0l1.8 2.2M1201.3 689.5l1.2 1.6M1193.7 693.5l2.1 -1.7M1201.6 693.3l1.7 -1.4M1184.4 702.9l1.7 2.0M1183.8 694.0l1.8 -1.5M1205.5 696.4l1.4 1.8M1201.9 697.2l2.0 -1.6M1199.5 699.6l1.5 1.8M1177.6 692.6l1.5 -1.2M1188.0 691.0l2.5 -2.1M1203.6 697.2l1.4 1.7M1189.3 694.5l2.2 -1.7M1200.6 700.0l1.5 -1.2M1180.9 701.9l2.0 -1.7M1181.6 698.2l1.2 1.5M1179.0 691.0l1.3 1.7M1199.7 700.4l1.6 -1.3M1193.7 695.7l1.2 1.5M1189.5 703.4l1.6 2.1"/><path fill="none" stroke="#3a4424" stroke-width="1.4" d="M1173.6 240.3l1.7 0.6M1174.2 242.6l1.9 -0.5M1162.0 258.9l1.5 1.8M1168.4 259.7l1.1 -0.9M1164.8 267.4l2.1 -0.6M1170.4 268.7l1.2 -0.3M1172.3 268.7l1.5 1.8M1174.3 268.6l1.7 -1.4M1190.9 273.2l1.5 1.8M1192.6 277.1l2.1 -0.6M1195.1 280.1l1.3 -0.3M1229.0 284.2l1.7 -0.4M1242.5 283.3l1.5 0.5M1244.9 285.6l0.8 1.0M1247.5 285.3l1.9 0.7M1248.8 288.3l1.3 0.5M1250.9 290.0l1.2 0.4M1243.6 287.9l1.3 0.5M1213.0 298.0l1.5 1.8M1035.1 360.5l1.2 -1.0M1033.4 361.4l1.5 -0.4M1030.4 366.7l1.6 0.6M1032.5 367.6l1.5 -0.4M1029.1 371.4l1.8 0.7M1030.6 372.7l2.0 -0.5M1004.4 398.3l1.6 0.6M1003.9 399.5l0.9 1.0M1019.1 416.0l1.0 1.2M1055.7 420.3l2.1 0.8M1059.6 433.8l1.0 1.1M1063.6 434.7l1.4 1.7M1071.1 434.9l1.6 0.6M1073.5 435.2l1.0 -0.8M1052.9 475.3l1.9 -0.5M1043.0 497.2l2.2 -0.6M1044.2 497.9l2.0 0.7M1040.5 502.3l1.7 0.6M1053.8 475.2l1.0 -0.9M996.9 558.9l1.0 -0.8M998.1 558.7l2.1 0.8M1018.4 558.2l1.5 0.5M1020.9 561.3l0.8 0.9M1019.8 564.5l0.8 1.0M1022.3 562.0l2.3 -0.6M1000.6 579.4l2.3 -0.6M1000.3 582.6l0.8 0.9M1002.8 581.1l1.3 0.5M1069.2 616.8l2.1 0.8M1070.4 618.5l1.9 -0.5M1030.6 620.3l0.9 1.0M1075.8 607.7l1.9 -0.5M1077.2 609.0l1.2 -1.0M1455.8 289.3l1.5 -0.4M1457.4 296.2l1.8 0.6M1454.2 290.9l2.1 0.7M1530.0 362.1l1.0 -0.8M1536.5 362.9l0.9 1.1M1531.7 364.0l1.8 0.6M1637.4 393.0l0.8 1.0M1638.6 397.1l1.1 1.4M1639.7 400.6l1.6 0.6M1640.8 403.9l1.1 -0.9M1626.5 417.7l1.0 1.1M1633.0 423.0l0.9 -0.8M1635.4 422.9l2.3 -0.6M1652.3 460.2l1.6 -0.4M1842.3 540.2l1.5 -0.4M1844.9 542.4l1.6 -1.3M1896.7 586.6l1.3 -1.1M1899.2 587.5l1.6 0.6M1925.2 607.3l0.8 1.0M1922.9 609.0l2.1 -0.6M1853.0 621.2l1.8 -1.5M1844.6 634.1l1.2 1.4M1892.4 633.2l1.2 1.4M1895.9 638.3l1.3 1.6M1892.1 646.4l1.8 -1.5M1900.3 639.4l1.1 1.3M1908.6 632.2l1.1 -0.9M1908.8 634.2l2.3 -0.6M1915.4 634.1l1.4 -1.2M1932.2 662.4l1.6 -0.4M1933.5 664.2l1.7 -1.4M999.6 581.7l1.4 -0.4M1002.2 580.5l1.0 -0.8M1069.0 617.9l1.3 -1.1M1030.0 621.5l1.8 -0.5M1091.5 824.2l1.4 -0.4M1092.4 827.0l1.4 -0.4M1090.3 830.5l1.9 -0.5M1090.1 1004.4l2.2 0.8M479.1 660.0h1.8M480.1 664.0h1.8M478.1 667.0h1.8M1090.1 825.0h1.8M1091.1 829.0h1.8M1460.1 789.0h1.8M1463.1 791.0h1.8M1458.1 793.0h1.8M1296.1 997.0h1.8M1298.1 1001.0h1.8M1300.1 1004.0h1.8M1165.1 956.0h1.8M1090.1 1004.0h1.8"/><g fill="#a5c66e" stroke="#3a4424" stroke-width="0.6"><path d="M1234.0 500.8L1245.4 496.8L1246.8 495.1L1252.7 495.9L1253.1 498.2L1234.9 503.7z"/><path d="M1850.0 544.8L1858.7 543.5L1859.1 546.1L1850.4 547.8z"/><path d="M1872.2 533.0L1875.2 530.4L1877.8 533.9L1874.8 537.0z"/><path d="M1866.1 543.5L1867.8 542.6L1869.1 545.7L1867.4 546.5z"/></g><g fill="none" stroke="#8e6dbb" stroke-width="1"><path d="M443.1 182.7L452.7 189.1L499.1 206.1L507.1 207.3L529.4 206.7L542.2 208.6L556.6 214.7L579.0 232.3L598.1 248.2L607.7 253.0L620.5 255.9L630.1 257.2L642.9 264.2L668.5 286.6L694.0 310.6L705.2 318.6L716.4 321.8L732.4 324.3L745.2 328.8L767.5 345.7L783.5 356.3L799.5 363.3L831.4 374.5L873.0 386.6L885.8 392.1L911.3 405.5L936.9 419.2L943.3 425.6L956.1 441.6L968.9 455.3L984.9 465.6L996.0 474.5"/><path d="M996.0 474.5L1018.4 472.0"/><path d="M1004.4 399.6L1013.0 402.7L1020.3 405.8L1025.4 408.9"/><path d="M757.4 1123.4L771.7 1112.4L814.8 1086.1L833.9 1071.7L848.3 1055.0L874.6 1011.9L915.2 942.6L939.1 914.9L977.4 870.9L1006.1 830.2L1034.8 791.9L1058.7 753.7L1073.0 717.8L1080.2 693.9L1087.4 672.4L1092.2 655.6"/><path d="M874.6 1011.9L880.8 1019.1L881.7 1057.4L886.5 1076.5L898.5 1099.5"/><path d="M1080.2 698.7L1088.3 699.6L1086.4 708.3L1077.8 706.3"/><path d="M1000.0 474.1L1018.5 472.3"/><path d="M996.0 474.6L998.9 479.6L1002.6 487.5L1003.3 499.4L1000.7 519.2L1002.0 540.3L1009.2 558.8L1019.8 572.0L1033.0 585.2L1043.6 595.8L1055.4 605.0"/><path d="M1008.5 560.0L1019.4 571.6L1038.8 590.3L1049.7 596.5L1054.3 592.6L1064.4 597.3L1069.9 600.4L1078.4 603.1"/><path d="M1019.4 620.9L1030.3 611.2L1054.3 591.1L1064.4 575.5"/><path d="M1054.3 606.6L1062.1 617.5L1068.3 629.9L1080.7 643.9L1092.4 655.1"/><path d="M1080.7 643.9L1096.3 611.2L1110.2 588.0"/><path d="M1091.6 660.0L1095.5 645.4L1100.9 629.9L1108.7 615.9L1116.5 601.9"/><path d="M1311.7 459.6L1355.2 454.3L1394.3 449.6L1416.1 451.3L1429.1 454.8L1463.9 460.9L1550.9 494.8L1594.3 510.9L1681.3 543.5L1768.3 574.8L1833.5 595.7L1855.2 600.0L1877.0 598.7L1910.9 593.5L1913.9 599.1L1925.7 607.8"/><path d="M1331.3 295.7L1396.5 286.1L1429.1 277.4L1440.0 287.0L1457.4 296.5L1477.0 317.4L1486.5 343.5L1485.7 382.6L1477.0 421.7L1463.9 460.9"/><path d="M1396.5 286.1L1392.2 300.0L1394.3 310.9L1398.7 317.4"/><path d="M1427.4 453.0L1430.0 451.3L1453.0 459.1"/><path d="M1530.0 361.7L1540.0 364.3L1550.9 371.7L1553.0 382.6L1549.6 395.7L1553.0 408.7L1561.7 421.7L1570.4 434.8L1568.3 447.8L1559.6 473.9L1550.9 494.8"/><path d="M1337.8 313.9L1342.2 312.2L1348.7 315.2L1355.2 321.7L1366.1 330.4L1374.8 340.0L1372.6 352.2L1370.4 371.7L1366.1 378.3L1350.9 381.7L1342.2 391.3L1340.0 408.7L1333.5 430.4L1327.0 438.3L1333.5 441.3L1355.2 441.7L1381.3 440.4L1390.0 444.3L1392.2 449.6"/><path d="M1592.2 509.6L1594.3 513.0L1603.0 512.2"/><path d="M1451.7 633.0L1446.5 634.8L1435.7 652.2L1423.9 668.7L1429.1 678.3L1440.0 695.7L1455.2 708.7L1460.4 709.6"/><path d="M1853.0 610.9L1847.8 615.2L1833.5 639.1L1811.7 663.0L1787.0 680.9"/><path d="M1847.8 615.2L1853.0 623.9"/><path d="M1895.2 590.0L1910.9 593.5"/><path d="M1928.3 669.6L1933.5 663.0"/><path d="M1934.3 673.0L1922.6 679.1L1920.4 686.1L1912.6 687.0L1911.7 693.5"/><path d="M1883.5 690.4L1900.9 693.5L1896.5 709.6L1880.4 700.0L1883.5 690.4"/><path d="M1889.1 691.7L1885.7 703.5"/><path d="M1895.2 692.6L1891.3 706.5"/><path d="M1900.9 693.5L1920.4 696.5L1916.1 713.0L1896.5 709.6"/><path d="M1907.4 694.8L1903.0 710.9"/><path d="M1898.7 701.3L1918.3 704.3"/><path d="M1911.7 693.5L1930.0 700.9"/><path d="M1912.6 687.0L1925.7 686.1L1927.0 689.6L1919.6 690.4"/></g><defs><filter id="goo" x="-5%" y="-5%" width="110%" height="110%" color-interpolation-filters="sRGB"><feGaussianBlur in="SourceGraphic" stdDeviation="1.5" result="b"/><feComponentTransfer in="b"><feFuncA type="linear" slope="10" intercept="-4.5"/></feComponentTransfer></filter></defs><g filter="url(#goo)" fill="#14084a" stroke="#14084a" stroke-linecap="round" stroke-linejoin="round"><path d="M1081.8 431.7L1118.1 401.3L1122.0 402.3L1131.9 419.8L1142.5 435.6L1159.7 421.7L1158.3 415.8L1164.3 409.2L1164.3 392.0L1161.7 386.8L1157.7 374.9L1157.0 368.9L1165.6 366.3L1176.2 362.3L1186.7 357.7L1192.0 359.7L1199.9 358.4L1201.3 353.1L1203.2 349.8L1207.2 349.1L1210.5 352.4L1213.1 363.0L1225.0 368.3L1235.6 372.5L1236.2 371.6L1248.0 374.3L1261.0 382.0L1269.0 390.0L1288.0 408.0L1290.3 411.0L1274.5 420.3L1281.1 424.2L1282.4 432.8L1289.0 433.5L1294.3 417.6L1302.2 428.8L1306.8 439.4L1308.8 448.6L1289.0 458.5L1310.8 455.2L1311.7 464.5L1299.6 466.5L1269.2 477.0L1242.8 489.6L1229.6 496.2L1220.4 502.8L1219.7 506.7L1220.4 510.7L1218.4 514.7L1203.2 520.6L1194.0 523.9L1193.9 524.4L1197.2 529.7L1186.0 531.7L1184.8 527.7L1184.8 527.8L1163.7 545.6L1149.2 562.8L1132.0 585.2L1117.5 607.7L1116.8 589.8L1114.9 587.2L1106.3 586.5L1126.7 561.5L1145.2 544.3L1163.7 529.8L1175.6 515.9L1169.0 508.0L1166.3 511.3L1161.1 508.6L1149.2 498.1L1145.2 502.0L1150.5 511.3L1145.2 517.2L1138.6 511.9L1129.4 515.2L1126.7 520.5L1108.3 513.3L1105.6 516.6L1122.8 527.1L1128.1 535.0L1125.4 539.0L1118.8 544.3L1114.9 549.6L1108.3 549.6L1104.3 544.3L1100.3 544.3L1097.0 541.0L1095.0 540.3L1084.5 558.8L1071.3 576.6L1068.0 576.6L1062.0 571.4L1073.9 549.6L1084.5 529.8L1092.4 513.9L1100.3 508.6L1099.0 506.0L1092.4 501.4L1087.1 500.1L1085.1 496.1L1087.1 492.8L1092.4 490.8L1096.4 483.6L1097.0 478.3L1107.6 467.1L1100.3 466.4L1091.1 464.4L1084.5 463.8L1077.9 464.4L1062.0 469.3L1046.2 474.6L1018.5 477.6L1019.8 467.1L1044.9 464.4L1062.0 458.5L1073.9 455.2L1084.5 454.8L1092.4 457.2L1099.0 458.5L1095.0 452.5L1085.8 440.0z" stroke-width="1.6"/><path d="M1164.6 547.8L1167.3 544.9L1184.2 538.0L1186.8 532.5L1183.4 527.1L1193.9 524.4L1197.2 529.7L1229.6 519.1L1233.3 521.1L1236.2 525.7L1239.2 531.7L1238.8 525.7L1241.5 523.8L1254.7 520.5L1259.9 522.2L1270.5 528.4L1273.1 533.0L1283.7 564.7L1283.4 571.3L1277.8 583.2L1267.9 587.8L1257.3 586.5L1246.7 589.8L1238.8 582.5L1232.2 579.2L1209.8 571.3L1206.5 581.8L1217.7 595.0L1223.0 604.3L1225.0 609.6L1224.3 614.9L1219.0 618.2L1215.0 614.9L1214.4 609.6L1211.1 603.0L1197.9 609.6L1212.4 632.0L1219.0 653.1L1234.9 643.9L1240.1 641.9L1239.9 642.0L1243.2 644.7L1248.5 653.9L1247.9 657.9L1241.9 664.5L1239.9 669.8L1220.1 681.7L1222.1 692.2L1218.8 692.9L1200.3 688.3L1179.2 680.3L1158.7 671.1L1175.2 640.1L1168.6 632.8L1158.7 618.9L1159.4 615.6L1168.6 605.7L1158.1 599.8L1152.8 591.9L1154.1 582.6L1153.0 584.5L1155.0 579.2L1154.6 563.4L1159.6 555.4L1164.6 552.5L1163.0 549.6z" stroke-width="1.6"/><circle cx="1107.8" cy="372.2" r="5.6" stroke-width="1.6"/><path d="M1131.9 384.1L1145.8 370.3" fill="none" stroke-width="11"/><path d="M1254.7 581.8L1271.8 606.3L1296.9 613.0" fill="none" stroke-width="11"/><path d="M1142.1 405.5L1160.3 389.4" fill="none" stroke-width="11.4"/><path d="M1151.1 412.9L1164.3 402.9" fill="none" stroke-width="10.4"/></g><g filter="url(#goo)"><g fill="#2c109f" stroke="none"><path d="M1081.8 431.7L1118.1 401.3L1122.0 402.3L1131.9 419.8L1142.5 435.6L1159.7 421.7L1158.3 415.8L1164.3 409.2L1164.3 392.0L1161.7 386.8L1157.7 374.9L1157.0 368.9L1165.6 366.3L1176.2 362.3L1186.7 357.7L1192.0 359.7L1199.9 358.4L1201.3 353.1L1203.2 349.8L1207.2 349.1L1210.5 352.4L1213.1 363.0L1225.0 368.3L1235.6 372.5L1236.2 371.6L1248.0 374.3L1261.0 382.0L1269.0 390.0L1288.0 408.0L1290.3 411.0L1274.5 420.3L1281.1 424.2L1282.4 432.8L1289.0 433.5L1294.3 417.6L1302.2 428.8L1306.8 439.4L1308.8 448.6L1289.0 458.5L1310.8 455.2L1311.7 464.5L1299.6 466.5L1269.2 477.0L1242.8 489.6L1229.6 496.2L1220.4 502.8L1219.7 506.7L1220.4 510.7L1218.4 514.7L1203.2 520.6L1194.0 523.9L1193.9 524.4L1197.2 529.7L1186.0 531.7L1184.8 527.7L1184.8 527.8L1163.7 545.6L1149.2 562.8L1132.0 585.2L1117.5 607.7L1116.8 589.8L1114.9 587.2L1106.3 586.5L1126.7 561.5L1145.2 544.3L1163.7 529.8L1175.6 515.9L1169.0 508.0L1166.3 511.3L1161.1 508.6L1149.2 498.1L1145.2 502.0L1150.5 511.3L1145.2 517.2L1138.6 511.9L1129.4 515.2L1126.7 520.5L1108.3 513.3L1105.6 516.6L1122.8 527.1L1128.1 535.0L1125.4 539.0L1118.8 544.3L1114.9 549.6L1108.3 549.6L1104.3 544.3L1100.3 544.3L1097.0 541.0L1095.0 540.3L1084.5 558.8L1071.3 576.6L1068.0 576.6L1062.0 571.4L1073.9 549.6L1084.5 529.8L1092.4 513.9L1100.3 508.6L1099.0 506.0L1092.4 501.4L1087.1 500.1L1085.1 496.1L1087.1 492.8L1092.4 490.8L1096.4 483.6L1097.0 478.3L1107.6 467.1L1100.3 466.4L1091.1 464.4L1084.5 463.8L1077.9 464.4L1062.0 469.3L1046.2 474.6L1018.5 477.6L1019.8 467.1L1044.9 464.4L1062.0 458.5L1073.9 455.2L1084.5 454.8L1092.4 457.2L1099.0 458.5L1095.0 452.5L1085.8 440.0z"/><path d="M1164.6 547.8L1167.3 544.9L1184.2 538.0L1186.8 532.5L1183.4 527.1L1193.9 524.4L1197.2 529.7L1229.6 519.1L1233.3 521.1L1236.2 525.7L1239.2 531.7L1238.8 525.7L1241.5 523.8L1254.7 520.5L1259.9 522.2L1270.5 528.4L1273.1 533.0L1283.7 564.7L1283.4 571.3L1277.8 583.2L1267.9 587.8L1257.3 586.5L1246.7 589.8L1238.8 582.5L1232.2 579.2L1209.8 571.3L1206.5 581.8L1217.7 595.0L1223.0 604.3L1225.0 609.6L1224.3 614.9L1219.0 618.2L1215.0 614.9L1214.4 609.6L1211.1 603.0L1197.9 609.6L1212.4 632.0L1219.0 653.1L1234.9 643.9L1240.1 641.9L1239.9 642.0L1243.2 644.7L1248.5 653.9L1247.9 657.9L1241.9 664.5L1239.9 669.8L1220.1 681.7L1222.1 692.2L1218.8 692.9L1200.3 688.3L1179.2 680.3L1158.7 671.1L1175.2 640.1L1168.6 632.8L1158.7 618.9L1159.4 615.6L1168.6 605.7L1158.1 599.8L1152.8 591.9L1154.1 582.6L1153.0 584.5L1155.0 579.2L1154.6 563.4L1159.6 555.4L1164.6 552.5L1163.0 549.6z"/><circle cx="1107.8" cy="372.2" r="5.6"/></g><g fill="none" stroke="#2c109f" stroke-linecap="round" stroke-linejoin="round"><path d="M1131.9 384.1L1145.8 370.3" stroke-width="9.8"/><path d="M1254.7 581.8L1271.8 606.3L1296.9 613.0" stroke-width="9.8"/><path d="M1142.1 405.5L1160.3 389.4" stroke-width="10.2"/><path d="M1151.1 412.9L1164.3 402.9" stroke-width="9.2"/></g></g><g fill="#dbfc4e" stroke="#1e1e14" stroke-width="0.7" stroke-linejoin="round"><path d="M1165.6 386.8L1172.2 388.1L1169.6 393.4L1172.2 398.6L1178.8 398.6L1183.4 403.9L1169.6 416.5L1159.0 411.8L1163.0 403.9L1164.3 392.0z"/><path d="M1093.0 433.6L1100.9 427.7L1101.7 428.7L1093.8 434.7z"/><path d="M1099.6 442.2L1108.2 435.6L1109.0 436.7L1100.4 443.3z"/><path d="M1106.9 450.8L1114.8 444.9L1115.6 445.9L1107.7 451.8z"/><path d="M1108.8 421.1L1117.4 414.5L1118.2 415.5L1109.6 422.1z"/><path d="M1116.1 429.0L1123.4 423.7L1124.2 424.8L1116.9 430.1z"/><path d="M1122.7 437.6L1128.6 433.0L1129.4 434.0L1123.5 438.6z"/><path d="M1114.1 460.7L1121.4 453.4L1122.0 455.4L1116.1 462.0z"/><path d="M1129.3 446.8L1135.2 442.2L1136.3 445.5L1131.3 448.2z"/><path d="M1137.9 455.4L1139.2 454.8L1143.8 460.0L1162.3 445.5L1163.2 446.8L1143.4 462.4z"/><path d="M1149.8 471.3L1153.7 467.6L1155.7 469.9L1151.7 473.9z"/><path d="M1113.5 487.8L1134.6 468.6L1135.6 469.9L1114.5 489.1z"/><path d="M1125.3 492.4L1136.6 482.9L1137.6 484.5L1126.4 494.0z"/><path d="M1186.1 415.1L1187.4 414.2L1193.3 421.1L1192.0 422.4z"/><path d="M1176.8 423.1L1178.2 422.1L1184.1 428.3L1182.8 429.7z"/><path d="M1186.7 393.1L1188.3 392.0L1192.0 396.0L1190.7 397.3z"/><path d="M1203.9 424.0L1208.9 421.5L1210.5 426.1L1205.2 428.7z"/><path d="M1193.3 434.3L1197.3 432.3L1199.7 437.2L1196.0 439.3z"/><path d="M1173.5 449.5L1182.1 443.3L1191.0 452.1L1182.5 461.0z"/><path d="M1188.7 468.0L1198.6 459.4L1211.8 471.9L1202.3 484.2z"/><path d="M1169.4 492.8L1183.5 478.5L1196.3 491.7L1184.8 509.3z"/><path d="M1204.6 448.8L1207.9 440.9L1217.1 432.3L1223.7 439.3L1220.0 442.2L1219.1 446.8L1225.0 453.4L1216.4 463.3z"/><path d="M1225.0 425.3L1240.2 412.5L1250.1 421.1L1246.1 425.0L1242.2 421.1L1236.9 422.4L1229.6 431.0z"/><path d="M1218.2 387.0L1227.9 379.9L1229.6 384.1L1222.6 393.1z"/><path d="M1235.6 393.6L1244.8 388.1L1254.1 385.4L1243.8 400.6z"/><path d="M1223.7 405.9L1229.6 401.9L1232.9 406.6L1227.0 411.2z"/><path d="M1215.8 413.4L1217.1 412.5L1220.8 417.1L1219.5 418.2z"/><path d="M1242.8 476.3L1244.8 469.7L1257.0 470.7z"/><path d="M1202.3 359.7L1203.4 359.4L1206.3 374.2L1205.2 374.5z"/><path d="M1225.0 470.6L1232.3 460.4L1233.2 461.1L1225.9 471.3z"/><path d="M1210.5 489.7L1219.1 478.5L1220.0 479.2L1211.8 493.7z"/><path d="M1226.3 485.1L1230.0 481.6L1231.0 482.9L1227.4 486.0z"/><path d="M1217.7 388.2L1227.0 380.7L1229.3 386.6L1222.3 392.9z"/><path d="M1235.5 393.9L1242.1 387.3L1254.4 385.3L1248.1 394.5L1243.5 400.5z"/><path d="M1223.7 405.7L1228.9 401.1L1233.6 405.7L1227.6 411.0z"/><path d="M1225.0 425.5L1240.2 411.7L1249.4 419.6L1246.8 424.2L1241.5 420.9L1235.5 423.6L1229.6 430.8z"/><path d="M1204.5 449.3L1216.4 432.1L1223.0 438.7L1219.7 442.0L1219.7 447.3L1225.0 453.9L1217.7 463.2z"/><path d="M1190.0 465.8L1197.9 459.2L1211.8 471.1L1202.5 484.3L1190.0 475.0z"/><path d="M1190.0 486.9L1195.3 492.2L1190.0 498.8z"/><path d="M1263.9 405.7L1269.9 398.5L1276.5 403.8L1270.5 411.0z"/><path d="M1253.4 449.3L1265.2 434.8L1273.2 440.7L1269.2 450.0L1271.8 456.6L1277.8 459.2L1281.1 462.5L1264.6 467.8L1261.9 455.9z"/><path d="M1242.8 469.8L1256.7 470.4L1242.8 475.7z"/><path d="M1203.2 424.9L1209.8 421.6L1210.9 425.5L1205.8 428.6z"/><path d="M1193.3 434.8L1196.6 432.5L1199.9 438.1L1197.3 439.4z"/><path d="M1215.7 413.7L1217.1 412.7L1220.6 417.2L1219.3 418.3z"/><path d="M1258.0 415.0L1259.3 414.1L1264.2 419.3L1262.9 420.4z"/><path d="M1225.0 471.1L1232.2 460.8L1233.3 461.6L1226.0 471.9z"/><path d="M1209.5 490.6L1211.1 489.3L1211.9 494.6z"/><path d="M1225.6 485.6L1229.6 481.4L1230.9 482.7L1227.2 486.3z"/><path d="M1199.2 504.1L1202.7 500.4L1203.7 501.5L1200.3 504.9z"/><path d="M1291.7 444.7L1295.2 444.7L1293.2 447.6z"/><path d="M1288.3 459.2L1303.5 454.2L1303.8 455.2L1290.3 459.6z"/><path d="M1246.7 546.9L1252.4 556.8L1258.9 575.5L1252.0 566.0L1247.4 562.0z"/><path d="M1193.9 637.3L1200.8 630.4L1199.2 637.3L1202.8 646.3z"/><path d="M1203.0 678.3L1205.6 673.5L1205.9 684.0z"/><path d="M1185.6 565.6L1188.6 563.4L1190.6 566.0L1187.6 568.4z"/><path d="M1116.5 587.2L1128.5 571.6L1129.0 572.3L1117.4 588.0z"/><path d="M1095.7 539.0L1101.0 527.1L1101.9 527.8L1097.0 540.3z"/></g><g stroke="#3a3a20" stroke-width="1" fill="none"><path d="M1210.5 490.2L1219.7 478.3"/><path d="M1238.2 452.6L1258.0 427.5"/><path d="M1256.0 399.8L1262.6 391.9"/><path d="M1238.2 452.8L1258.0 427.7"/><path d="M1213.1 355.7L1213.9 363.0"/></g><path fill="none" stroke="#4a5a28" stroke-width="1.1" d="M1188.2 417.7l1.1 1.3M1190.4 420.3l1.2 1.5M1190.0 418.9l0.9 -0.7M1189.6 419.4l1.6 -1.4M1189.4 418.5l1.1 -1.0M1189.0 416.6l1.1 1.3M1188.3 417.6l0.8 1.0M1188.5 417.2l0.8 1.0M1179.4 424.9l1.2 1.6M1178.1 424.1l1.6 -1.4M1177.7 422.5l1.3 1.5M1180.3 426.6l0.7 0.9M1179.3 424.8l1.2 -1.0M1179.7 425.4l1.2 1.4M1181.3 427.6l1.6 -1.3M1177.9 423.9l1.0 1.2M1189.2 395.2l0.9 -0.7M1188.2 393.0l0.9 1.1M1187.4 393.9l1.5 -1.3M1187.8 392.1l0.6 0.8M1189.0 395.3l1.4 1.7M1187.6 393.5l1.0 -0.8M1190.0 397.8l1.4 -1.2M1188.9 394.4l1.0 1.2M1190.5 397.2l1.0 -0.9"/></svg></div>
  <div id="status"></div>
</div>
</body>
</html>
